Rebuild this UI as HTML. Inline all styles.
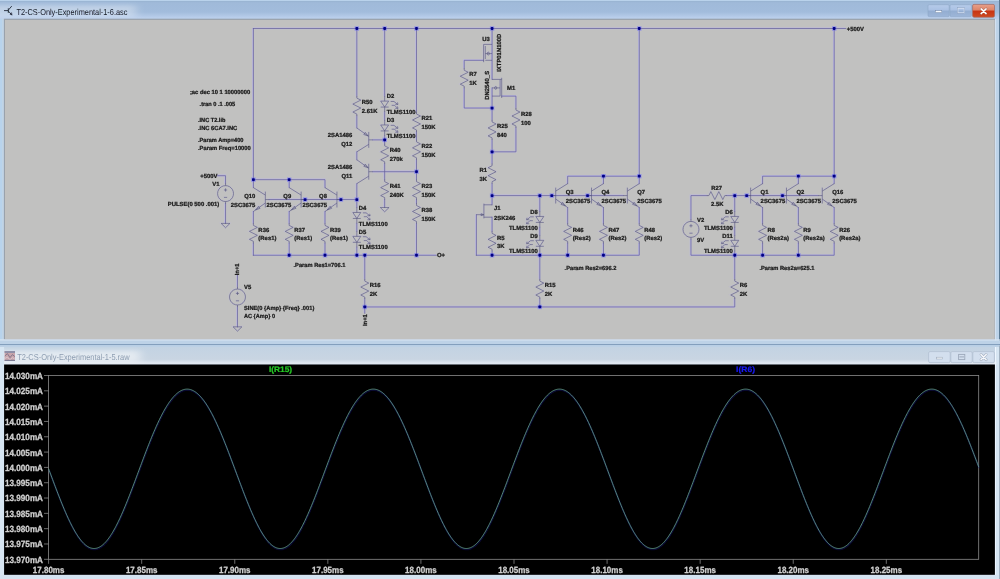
<!DOCTYPE html>
<html><head><meta charset="utf-8"><title>LTspice</title>
<style>
html,body{margin:0;padding:0;background:#c9dcf0;overflow:hidden}
svg{display:block}
text{font-family:"Liberation Sans",sans-serif;text-rendering:geometricPrecision}
</style></head><body>
<svg width="1000" height="579" viewBox="0 0 1000 579">
<defs>
<filter id="soft" x="0" y="0" width="1000" height="579" filterUnits="userSpaceOnUse"><feGaussianBlur stdDeviation="0.42"/></filter>
<filter id="halo" x="0" y="0" width="1000" height="579" filterUnits="userSpaceOnUse"><feGaussianBlur stdDeviation="0.7"/></filter>
<filter id="glow" x="-40" y="-20" width="260" height="420" filterUnits="userSpaceOnUse"><feGaussianBlur stdDeviation="5 2.2"/></filter>
<filter id="soft2" x="0" y="0" width="1000" height="579" filterUnits="userSpaceOnUse"><feGaussianBlur stdDeviation="0.3"/></filter>
<linearGradient id="tb" x1="0" y1="0" x2="0" y2="1"><stop offset="0" stop-color="#9fb9d8"/><stop offset="0.6" stop-color="#a2bcdc"/><stop offset="0.88" stop-color="#b9ceeb"/><stop offset="1" stop-color="#b9ceeb"/></linearGradient>
<linearGradient id="tb2" x1="0" y1="0" x2="0" y2="1"><stop offset="0" stop-color="#c3d3e3"/><stop offset="0.7" stop-color="#c9d5e2"/><stop offset="0.9" stop-color="#e0e7f0"/><stop offset="1" stop-color="#e4eaf3"/></linearGradient>
<linearGradient id="tbh" x1="0" y1="0" x2="1" y2="0"><stop offset="0" stop-color="#a8c6e0" stop-opacity="0.5"/><stop offset="0.5" stop-color="#b2c4e8" stop-opacity="0.35"/><stop offset="1" stop-color="#b6c2ec" stop-opacity="0.6"/></linearGradient>
<linearGradient id="cl" x1="0" y1="0" x2="0" y2="1"><stop offset="0" stop-color="#e8a08a"/><stop offset="0.44" stop-color="#de8468"/><stop offset="0.52" stop-color="#c83414"/><stop offset="1" stop-color="#cf4a20"/></linearGradient>
<linearGradient id="bt" x1="0" y1="0" x2="0" y2="1"><stop offset="0" stop-color="#b6cbea"/><stop offset="0.46" stop-color="#aac1e3"/><stop offset="0.52" stop-color="#93add1"/><stop offset="1" stop-color="#9db6d8"/></linearGradient>
</defs>
<rect x="0" y="0" width="1000" height="579" fill="#bcd2ea"/>
<!-- top window title bar -->
<rect x="0" y="0" width="1000" height="20" fill="url(#tb)"/>
<rect x="0" y="0" width="1000" height="1.2" fill="#b9d2eb"/>
<rect x="0" y="1.2" width="1000" height="0.9" fill="#98b3d1"/>
<rect x="-10" y="5" width="146" height="12" fill="#fff" opacity="0.33" filter="url(#glow)"/>
<!-- left/right frame -->
<rect x="0" y="19" width="4.2" height="322" fill="#b8d3ec"/>
<rect x="2" y="19" width="2" height="322" fill="#c0d4e6"/>
<rect x="995" y="19" width="1.3" height="322" fill="#d4e1f0"/>
<rect x="996.3" y="19" width="2.7" height="322" fill="#bdd3e9"/>
<rect x="999" y="0" width="1" height="346" fill="#5c7a94"/>
<!-- schematic canvas -->
<rect x="3.9" y="18.7" width="991.1" height="320.8" fill="#98a1ab"/>
<rect x="4.95" y="19.9" width="989.75" height="319.5" fill="#c1c1c0"/>
<!-- separator between windows -->
<rect x="0" y="339.4" width="1000" height="1.3" fill="#dbe7f3"/>
<rect x="0" y="340.7" width="1000" height="3.5" fill="#bdd2e7"/>
<rect x="0" y="344.1" width="1000" height="1.1" fill="#7d9ab8"/>
<rect x="0" y="345.2" width="1000" height="1.8" fill="#bcd1e6"/>
<rect x="0" y="347" width="1000" height="17.6" fill="url(#tb2)"/>
<rect x="-10" y="350.5" width="150" height="12" fill="#fff" opacity="0.5" filter="url(#glow)"/>
<rect x="0" y="347" width="4.1" height="232" fill="#d7e6f3"/>
<rect x="995" y="347" width="1.4" height="232" fill="#eef6ff"/>
<rect x="996.4" y="347" width="2.6" height="232" fill="#d7e6f3"/>
<rect x="999" y="346" width="1" height="233" fill="#a0b0c0"/>
<!-- waveform canvas -->
<rect x="4.1" y="364.5" width="990.8" height="210.4" fill="#000"/>
<rect x="0" y="574.9" width="999" height="4.1" fill="#d5e3f1"/>

<g filter="url(#soft2)">
<g fill="none" stroke="#1c2230" stroke-width="0.85" stroke-linecap="round">
<path d="M4.4,10.6 H8.2"/><path d="M8.3,8.6 V12.6" stroke-width="0.8"/><path d="M8.4,10 L11.5,6.4"/><path d="M8.4,11.2 L11.4,14.4"/>
<path d="M11.9,15 L9.9,14.2 L11.3,12.8 Z" fill="#1c2230" stroke-width="0.4"/>
</g>
<text transform="translate(16.4,14.7) scale(0.1)" font-size="86" fill="#161a26" textLength="1110" lengthAdjust="spacingAndGlyphs">T2-CS-Only-Experimental-1-6.asc</text>
</g>
<!-- top window buttons -->
<rect x="928" y="4.7" width="21.2" height="11.9" rx="1.2" fill="url(#bt)" stroke="#8fa8c8" stroke-width="0.6"/>
<rect x="950" y="4.7" width="21.4" height="11.9" rx="1.2" fill="url(#bt)" stroke="#8fa8c8" stroke-width="0.6"/>
<rect x="972.6" y="4.4" width="21.9" height="12.8" rx="1.4" fill="url(#cl)" stroke="#a2665e" stroke-width="0.7"/>
<rect x="935.4" y="10.7" width="6.4" height="1.9" fill="#f4f8fc" stroke="#6a7c9a" stroke-width="0.4"/>
<rect x="957.9" y="8.3" width="6.3" height="4.5" fill="none" stroke="#d3def0" stroke-width="1"/>
<rect x="957.3" y="7.7" width="7.5" height="5.7" fill="none" stroke="#7c8eaa" stroke-width="0.3"/>
<path d="M981.1,8.9 L986.1,13.6 M986.1,8.9 L981.1,13.6" stroke="#8a5048" stroke-width="2.5" fill="none" stroke-linecap="round" opacity="0.6"/>
<path d="M981.1,8.9 L986.1,13.6 M986.1,8.9 L981.1,13.6" stroke="#fff" stroke-width="1.5" fill="none" stroke-linecap="round"/>
<!-- bottom window title -->
<g>
<rect x="4.6" y="351" width="10.4" height="10" fill="#c9a6ac"/>
<rect x="4.6" y="351" width="10.4" height="2" fill="#8f90a8"/>
<path d="M4.8,356 L7.4,353.6 L10,357.6 L12.4,354.6 L14.8,356.6" stroke="#7c7088" stroke-width="0.9" fill="none"/>
<path d="M4.8,358.6 L7.4,357 L10,360 L12.4,357.6 L14.8,359.4" stroke="#d8c4cc" stroke-width="0.9" fill="none"/>
<rect x="4.6" y="359.8" width="10.4" height="1.2" fill="#7c7c94"/>
</g>
<g filter="url(#soft)"><text transform="translate(17.2,359.5) scale(0.1)" font-size="86" fill="#8d9db1" textLength="1124" lengthAdjust="spacingAndGlyphs">T2-CS-Only-Experimental-1-5.raw</text></g>
<rect x="928.6" y="351.6" width="21.6" height="11" rx="1.4" fill="#d3dfee" stroke="#b3c0d2" stroke-width="0.8"/>
<rect x="950.8" y="351.6" width="21.4" height="11" rx="1.4" fill="#d3dfee" stroke="#b3c0d2" stroke-width="0.8"/>
<rect x="972.8" y="351.6" width="21.6" height="11" rx="1.4" fill="#d3dfee" stroke="#b3c0d2" stroke-width="0.8"/>
<rect x="936.4" y="357.2" width="6" height="1.8" fill="#f0f4f8" stroke="#98a4b6" stroke-width="0.5"/>
<rect x="958.6" y="354.4" width="6.2" height="5.2" fill="none" stroke="#9ca8ba" stroke-width="0.9"/>
<rect x="959.4" y="356.4" width="4.6" height="1" fill="#9ca8ba"/>
<path d="M981,354.4 L986.2,359.8 M986.2,354.4 L981,359.8" stroke="#a3afc1" stroke-width="2.7" fill="none" stroke-linecap="round"/>
<path d="M981,354.4 L986.2,359.8 M986.2,354.4 L981,359.8" stroke="#f6f8fb" stroke-width="1.5" fill="none" stroke-linecap="round"/>

<defs><path id="W" d="M253.4,28.5 L845.72,28.5 M253.4,28.5 L253.4,187.62 M217.5,175.69 L225.55,175.69 L225.55,183.64 M225.55,203.53 L225.55,223.42 M253.4,179.66 L325,179.66 L325,187.62 M289.2,179.66 L289.2,187.62 M253.4,211.49 L253.4,223.42 M253.4,243.31 L253.4,255.25 M289.2,211.49 L289.2,223.42 M289.2,243.31 L289.2,255.25 M325,211.49 L325,223.42 M325,243.31 L325,255.25 M269.31,199.55 L356.83,199.55 M253.4,255.25 L436.39,255.25 M356.83,28.5 L356.83,96.13 M356.83,116.02 L356.83,127.95 M356.83,151.82 L356.83,159.77 M356.83,183.64 L356.83,207.51 M356.83,223.42 L356.83,231.38 M356.83,247.29 L356.83,255.25 M372.74,139.88 L384.67,139.88 M372.74,171.71 L416.5,171.71 M384.67,28.5 L384.67,96.13 M384.67,112.04 L384.67,119.99 M384.67,135.91 L384.67,143.86 M384.67,163.75 L384.67,179.66 M384.67,199.55 L384.67,207.51 M416.5,28.5 L416.5,112.04 M416.5,131.93 L416.5,139.88 M416.5,159.77 L416.5,179.66 M416.5,199.55 L416.5,203.53 M416.5,223.42 L416.5,255.25 M364.78,255.25 L364.78,279.11 M364.78,299 L364.78,313.32 M364.78,306.96 L734.74,306.96 L734.74,299 M237.49,275.14 L237.49,287.07 M237.49,306.96 L237.49,326.85 M492.08,28.5 L492.08,79.4 M492.08,87.9 L492.08,119.99 M483.6,60.32 L464.23,60.32 L464.23,68.28 M464.23,88.17 L464.23,108.06 L492.08,108.06 M501.7,96.13 L515.95,96.13 L515.95,108.06 M515.95,127.95 L515.95,151.82 L492.08,151.82 M492.08,139.88 L492.08,163.75 M492.08,183.64 L492.08,204.8 M476.4,214.7 L476.4,255.25 M492.08,217.2 L492.08,231.38 M492.08,251.27 L492.08,255.25 M476.4,255.25 L639.27,255.25 L639.27,243.31 M492.08,195.58 L623.35,195.58 M539.82,195.58 L539.82,211.49 M539.82,227.4 L539.82,235.36 M539.82,251.27 L539.82,279.11 M539.82,299 L539.82,306.96 M567.66,183.64 L567.66,176.2 L639.27,176.2 M603.46,183.64 L603.46,176.2 M639.27,28.5 L639.27,183.64 M567.66,207.51 L567.66,223.42 M567.66,243.31 L567.66,255.25 M603.46,207.51 L603.46,223.42 M603.46,243.31 L603.46,255.25 M639.27,207.51 L639.27,223.42 M690.98,219.44 L690.98,195.58 L706.89,195.58 M726.78,195.58 L818.28,195.58 M690.98,239.33 L690.98,255.25 L834.19,255.25 L834.19,243.31 M734.74,195.58 L734.74,211.49 M734.74,227.4 L734.74,235.36 M734.74,251.27 L734.74,279.11 M762.58,183.64 L762.58,176.2 L834.19,176.2 M798.39,183.64 L798.39,176.2 M834.19,28.5 L834.19,183.64 M762.58,207.51 L762.58,223.42 M762.58,243.31 L762.58,255.25 M798.39,207.51 L798.39,223.42 M798.39,243.31 L798.39,255.25 M834.19,207.51 L834.19,223.42"/><path id="S" d="M225.55,185.63 a7.96,7.96 0 1 0 0.01,0 Z M225.55,183.64 L225.55,185.63 M225.55,201.54 L225.55,203.53 M223.95,189.99 L227.15,189.99 M225.55,188.39 L225.55,191.59 M223.95,197.39 L227.15,197.39 M221.15,223.42 L229.95,223.42 L225.55,227.72 Z M265.33,191.6 L265.33,207.51 M269.31,199.55 L265.33,199.55 M253.4,187.62 L265.33,195.08 M265.33,203.03 L253.4,211.49 M255.55,209.97 L258.55,206.25 L260.05,208.37 Z M253.4,223.42 L253.4,225.41 L257.38,227.4 L249.42,231.38 L257.38,235.36 L249.42,239.33 L253.4,241.32 L253.4,243.31 M301.14,191.6 L301.14,207.51 M305.11,199.55 L301.14,199.55 M289.2,187.62 L301.14,195.08 M301.14,203.03 L289.2,211.49 M291.35,209.97 L294.35,206.25 L295.86,208.37 Z M289.2,223.42 L289.2,225.41 L293.18,227.4 L285.22,231.38 L293.18,235.36 L285.22,239.33 L289.2,241.32 L289.2,243.31 M336.94,191.6 L336.94,207.51 M340.92,199.55 L336.94,199.55 M325,187.62 L336.94,195.08 M336.94,203.03 L325,211.49 M327.15,209.97 L330.15,206.25 L331.66,208.37 Z M325,223.42 L325,225.41 L328.98,227.4 L321.03,231.38 L328.98,235.36 L321.03,239.33 L325,241.32 L325,243.31 M356.83,96.13 L356.83,98.12 L360.81,100.1 L352.85,104.08 L360.81,108.06 L352.85,112.04 L356.83,114.03 L356.83,116.02 M368.76,131.93 L368.76,147.84 M372.74,139.88 L368.76,139.88 M356.83,127.95 L368.76,136.4 M368.76,144.36 L356.83,151.82 M368.17,135.98 L363.82,134.5 L365.33,132.38 Z M368.76,163.75 L368.76,179.66 M372.74,171.71 L368.76,171.71 M356.83,159.77 L368.76,168.23 M368.76,176.18 L356.83,183.64 M368.17,167.8 L363.82,166.32 L365.33,164.2 Z M352.85,212.48 L360.81,212.48 L356.83,218.45 Z M352.85,218.45 L360.81,218.45 M356.83,207.51 L356.83,212.48 M356.83,218.45 L356.83,223.42 M362.83,212.86 L366.13,212.86 L369.83,215.81 M367.43,215.71 L370.13,215.81 L369.63,213.81 M363.83,216.71 L366.83,216.71 L369.83,219.81 M367.43,219.71 L370.13,219.81 L369.63,217.81 M352.85,236.35 L360.81,236.35 L356.83,242.32 Z M352.85,242.32 L360.81,242.32 M356.83,231.38 L356.83,236.35 M356.83,242.32 L356.83,247.29 M362.83,236.73 L366.13,236.73 L369.83,239.68 M367.43,239.58 L370.13,239.68 L369.63,237.68 M363.83,240.58 L366.83,240.58 L369.83,243.68 M367.43,243.58 L370.13,243.68 L369.63,241.68 M380.7,101.1 L388.65,101.1 L384.67,107.07 Z M380.7,107.07 L388.65,107.07 M384.67,96.13 L384.67,101.1 M384.67,107.07 L384.67,112.04 M390.67,101.48 L393.97,101.48 L397.67,104.43 M395.27,104.33 L397.97,104.43 L397.47,102.43 M391.67,105.33 L394.67,105.33 L397.67,108.43 M395.27,108.33 L397.97,108.43 L397.47,106.43 M380.7,124.97 L388.65,124.97 L384.67,130.93 Z M380.7,130.93 L388.65,130.93 M384.67,119.99 L384.67,124.97 M384.67,130.93 L384.67,135.91 M390.67,125.34 L393.97,125.34 L397.67,128.29 M395.27,128.19 L397.97,128.29 L397.47,126.29 M391.67,129.19 L394.67,129.19 L397.67,132.29 M395.27,132.19 L397.97,132.29 L397.47,130.29 M384.67,143.86 L384.67,145.85 L388.65,147.84 L380.7,151.82 L388.65,155.8 L380.7,159.77 L384.67,161.76 L384.67,163.75 M384.67,179.66 L384.67,181.65 L388.65,183.64 L380.7,187.62 L388.65,191.6 L380.7,195.58 L384.67,197.57 L384.67,199.55 M380.27,207.51 L389.07,207.51 L384.67,211.81 Z M416.5,112.04 L416.5,114.03 L420.48,116.02 L412.52,119.99 L420.48,123.97 L412.52,127.95 L416.5,129.94 L416.5,131.93 M416.5,139.88 L416.5,141.87 L420.48,143.86 L412.52,147.84 L420.48,151.82 L412.52,155.8 L416.5,157.79 L416.5,159.77 M416.5,179.66 L416.5,181.65 L420.48,183.64 L412.52,187.62 L420.48,191.6 L412.52,195.58 L416.5,197.57 L416.5,199.55 M416.5,203.53 L416.5,205.52 L420.48,207.51 L412.52,211.49 L420.48,215.47 L412.52,219.44 L416.5,221.43 L416.5,223.42 M364.78,279.11 L364.78,281.1 L368.76,283.09 L360.81,287.07 L368.76,291.05 L360.81,295.03 L364.78,297.02 L364.78,299 M237.49,289.06 a7.96,7.96 0 1 0 0.01,0 Z M237.49,287.07 L237.49,289.06 M237.49,304.97 L237.49,306.96 M235.89,293.41 L239.09,293.41 M237.49,291.81 L237.49,295.01 M235.89,300.81 L239.09,300.81 M233.09,326.85 L241.89,326.85 L237.49,331.15 Z M483.6,44.4 L492.08,44.4 M483.6,44.4 L483.6,62.2 M485.3,46 L485.3,59 M485.3,53.6 L492.08,53.6 M487.2,53.6 a1.1,1.4 0 1 0 2.2,0 a1.1,1.4 0 1 0 -2.2,0 Z M485.3,60.3 L492.08,60.3 M464.23,68.28 L464.23,70.27 L468.21,72.26 L460.26,76.24 L468.21,80.21 L460.26,84.19 L464.23,86.18 L464.23,88.17 M492.08,79.4 L501.7,79.4 M501.7,77.8 L501.7,98 M500.1,79.4 L500.1,96.1 M492.08,87.9 L500.1,87.9 M494.6,87.9 a1.1,1.4 0 1 0 2.2,0 a1.1,1.4 0 1 0 -2.2,0 Z M492.08,96.1 L500.1,96.1 M515.95,108.06 L515.95,110.05 L519.93,112.04 L511.97,116.02 L519.93,119.99 L511.97,123.97 L515.95,125.96 L515.95,127.95 M492.08,119.99 L492.08,121.98 L496.06,123.97 L488.1,127.95 L496.06,131.93 L488.1,135.91 L492.08,137.9 L492.08,139.88 M492.08,163.75 L492.08,165.74 L488.1,167.73 L496.06,171.71 L488.1,175.69 L496.06,179.66 L492.08,181.65 L492.08,183.64 M492.08,204.8 L483.9,204.8 M483.9,203.6 L483.9,218.4 M483.9,217.2 L492.08,217.2 M476.4,214.7 L483.9,214.7 M483.7,214.7 L481.1,215.7 L481.1,213.7 Z M492.08,231.38 L492.08,233.37 L496.06,235.36 L488.1,239.33 L496.06,243.31 L488.1,247.29 L492.08,249.28 L492.08,251.27 M535.84,216.46 L543.79,216.46 L539.82,222.43 Z M535.84,222.43 L543.79,222.43 M539.82,211.49 L539.82,216.46 M539.82,222.43 L539.82,227.4 M533.82,216.84 L530.52,216.84 L526.82,219.79 M529.22,219.69 L526.52,219.79 L527.02,217.79 M532.82,220.69 L529.82,220.69 L526.82,223.79 M529.22,223.69 L526.52,223.79 L527.02,221.79 M535.84,240.33 L543.79,240.33 L539.82,246.3 Z M535.84,246.3 L543.79,246.3 M539.82,235.36 L539.82,240.33 M539.82,246.3 L539.82,251.27 M533.82,240.71 L530.52,240.71 L526.82,243.66 M529.22,243.56 L526.52,243.66 L527.02,241.66 M532.82,244.56 L529.82,244.56 L526.82,247.66 M529.22,247.56 L526.52,247.66 L527.02,245.66 M539.82,279.11 L539.82,281.1 L543.79,283.09 L535.84,287.07 L543.79,291.05 L535.84,295.03 L539.82,297.02 L539.82,299 M555.73,187.62 L555.73,203.53 M551.75,195.58 L555.73,195.58 M567.66,183.64 L555.73,191.1 M555.73,199.06 L567.66,207.51 M565.51,205.99 L561.01,204.39 L562.51,202.27 Z M567.66,223.42 L567.66,225.41 L571.64,227.4 L563.68,231.38 L571.64,235.36 L563.68,239.33 L567.66,241.32 L567.66,243.31 M591.53,187.62 L591.53,203.53 M587.55,195.58 L591.53,195.58 M603.46,183.64 L591.53,191.1 M591.53,199.06 L603.46,207.51 M601.32,205.99 L596.81,204.39 L598.31,202.27 Z M603.46,223.42 L603.46,225.41 L607.44,227.4 L599.49,231.38 L607.44,235.36 L599.49,239.33 L603.46,241.32 L603.46,243.31 M627.33,187.62 L627.33,203.53 M623.35,195.58 L627.33,195.58 M639.27,183.64 L627.33,191.1 M627.33,199.06 L639.27,207.51 M637.12,205.99 L632.61,204.39 L634.12,202.27 Z M639.27,223.42 L639.27,225.41 L643.24,227.4 L635.29,231.38 L643.24,235.36 L635.29,239.33 L639.27,241.32 L639.27,243.31 M706.89,195.58 L708.88,195.58 L710.87,191.6 L714.85,199.55 L718.83,191.6 L722.8,199.55 L724.79,195.58 L726.78,195.58 M690.98,221.43 a7.96,7.96 0 1 0 0.01,0 Z M690.98,219.44 L690.98,221.43 M690.98,237.34 L690.98,239.33 M689.38,225.79 L692.58,225.79 M690.98,224.19 L690.98,227.39 M689.38,233.19 L692.58,233.19 M730.76,216.46 L738.72,216.46 L734.74,222.43 Z M730.76,222.43 L738.72,222.43 M734.74,211.49 L734.74,216.46 M734.74,222.43 L734.74,227.4 M728.74,216.84 L725.44,216.84 L721.74,219.79 M724.14,219.69 L721.44,219.79 L721.94,217.79 M727.74,220.69 L724.74,220.69 L721.74,223.79 M724.14,223.69 L721.44,223.79 L721.94,221.79 M730.76,240.33 L738.72,240.33 L734.74,246.3 Z M730.76,246.3 L738.72,246.3 M734.74,235.36 L734.74,240.33 M734.74,246.3 L734.74,251.27 M728.74,240.71 L725.44,240.71 L721.74,243.66 M724.14,243.56 L721.44,243.66 L721.94,241.66 M727.74,244.56 L724.74,244.56 L721.74,247.66 M724.14,247.56 L721.44,247.66 L721.94,245.66 M734.74,279.11 L734.74,281.1 L738.72,283.09 L730.76,287.07 L738.72,291.05 L730.76,295.03 L734.74,297.02 L734.74,299 M750.65,187.62 L750.65,203.53 M746.67,195.58 L750.65,195.58 M762.58,183.64 L750.65,191.1 M750.65,199.06 L762.58,207.51 M760.44,205.99 L755.93,204.39 L757.43,202.27 Z M762.58,223.42 L762.58,225.41 L766.56,227.4 L758.61,231.38 L766.56,235.36 L758.61,239.33 L762.58,241.32 L762.58,243.31 M786.45,187.62 L786.45,203.53 M782.47,195.58 L786.45,195.58 M798.39,183.64 L786.45,191.1 M786.45,199.06 L798.39,207.51 M796.24,205.99 L791.73,204.39 L793.24,202.27 Z M798.39,223.42 L798.39,225.41 L802.36,227.4 L794.41,231.38 L802.36,235.36 L794.41,239.33 L798.39,241.32 L798.39,243.31 M822.25,187.62 L822.25,203.53 M818.28,195.58 L822.25,195.58 M834.19,183.64 L822.25,191.1 M822.25,199.06 L834.19,207.51 M832.04,205.99 L827.53,204.39 L829.04,202.27 Z M834.19,223.42 L834.19,225.41 L838.17,227.4 L830.21,231.38 L838.17,235.36 L830.21,239.33 L834.19,241.32 L834.19,243.31"/></defs>
<g filter="url(#halo)" fill="none" stroke="#b4aefc">
<use href="#W" stroke-width="1.8" opacity="0.5" transform="translate(-0.35,-0.2)"/><use href="#S" stroke-width="1.6" opacity="0.22" transform="translate(-0.3,-0.2)"/>
<g fill="#6a6aff" stroke="none" opacity="0.55">
<rect x="354.63" y="26.3" width="4.4" height="4.4"/>
<rect x="382.47" y="26.3" width="4.4" height="4.4"/>
<rect x="414.3" y="26.3" width="4.4" height="4.4"/>
<rect x="489.88" y="26.3" width="4.4" height="4.4"/>
<rect x="637.07" y="26.3" width="4.4" height="4.4"/>
<rect x="831.99" y="26.3" width="4.4" height="4.4"/>
<rect x="251.2" y="177.46" width="4.4" height="4.4"/>
<rect x="287" y="177.46" width="4.4" height="4.4"/>
<rect x="302.91" y="197.35" width="4.4" height="4.4"/>
<rect x="338.72" y="197.35" width="4.4" height="4.4"/>
<rect x="354.63" y="197.35" width="4.4" height="4.4"/>
<rect x="287" y="253.05" width="4.4" height="4.4"/>
<rect x="322.8" y="253.05" width="4.4" height="4.4"/>
<rect x="354.63" y="253.05" width="4.4" height="4.4"/>
<rect x="362.58" y="253.05" width="4.4" height="4.4"/>
<rect x="414.3" y="253.05" width="4.4" height="4.4"/>
<rect x="382.47" y="137.68" width="4.4" height="4.4"/>
<rect x="414.3" y="169.51" width="4.4" height="4.4"/>
<rect x="362.58" y="304.76" width="4.4" height="4.4"/>
<rect x="537.62" y="304.76" width="4.4" height="4.4"/>
<rect x="489.88" y="105.86" width="4.4" height="4.4"/>
<rect x="489.88" y="149.62" width="4.4" height="4.4"/>
<rect x="489.88" y="193.38" width="4.4" height="4.4"/>
<rect x="489.88" y="253.05" width="4.4" height="4.4"/>
<rect x="537.62" y="253.05" width="4.4" height="4.4"/>
<rect x="565.46" y="253.05" width="4.4" height="4.4"/>
<rect x="601.26" y="253.05" width="4.4" height="4.4"/>
<rect x="537.62" y="193.38" width="4.4" height="4.4"/>
<rect x="549.55" y="193.38" width="4.4" height="4.4"/>
<rect x="585.35" y="193.38" width="4.4" height="4.4"/>
<rect x="601.26" y="174" width="4.4" height="4.4"/>
<rect x="637.07" y="174" width="4.4" height="4.4"/>
<rect x="732.54" y="193.38" width="4.4" height="4.4"/>
<rect x="744.47" y="193.38" width="4.4" height="4.4"/>
<rect x="780.27" y="193.38" width="4.4" height="4.4"/>
<rect x="732.54" y="253.05" width="4.4" height="4.4"/>
<rect x="760.38" y="253.05" width="4.4" height="4.4"/>
<rect x="796.19" y="253.05" width="4.4" height="4.4"/>
<rect x="796.19" y="174" width="4.4" height="4.4"/>
<rect x="831.99" y="174" width="4.4" height="4.4"/>
</g></g>
<g filter="url(#soft)">
<use href="#W" fill="none" stroke="#666298" stroke-width="0.74" stroke-linecap="square"/>
<use href="#S" fill="none" stroke="#565678" stroke-width="0.62"/>
<g fill="#040486">
<rect x="355.43" y="27.1" width="2.8" height="2.8" rx="0.8"/>
<rect x="383.27" y="27.1" width="2.8" height="2.8" rx="0.8"/>
<rect x="415.1" y="27.1" width="2.8" height="2.8" rx="0.8"/>
<rect x="490.68" y="27.1" width="2.8" height="2.8" rx="0.8"/>
<rect x="637.87" y="27.1" width="2.8" height="2.8" rx="0.8"/>
<rect x="832.79" y="27.1" width="2.8" height="2.8" rx="0.8"/>
<rect x="252" y="178.26" width="2.8" height="2.8" rx="0.8"/>
<rect x="287.8" y="178.26" width="2.8" height="2.8" rx="0.8"/>
<rect x="303.71" y="198.15" width="2.8" height="2.8" rx="0.8"/>
<rect x="339.52" y="198.15" width="2.8" height="2.8" rx="0.8"/>
<rect x="355.43" y="198.15" width="2.8" height="2.8" rx="0.8"/>
<rect x="287.8" y="253.85" width="2.8" height="2.8" rx="0.8"/>
<rect x="323.6" y="253.85" width="2.8" height="2.8" rx="0.8"/>
<rect x="355.43" y="253.85" width="2.8" height="2.8" rx="0.8"/>
<rect x="363.38" y="253.85" width="2.8" height="2.8" rx="0.8"/>
<rect x="415.1" y="253.85" width="2.8" height="2.8" rx="0.8"/>
<rect x="383.27" y="138.48" width="2.8" height="2.8" rx="0.8"/>
<rect x="415.1" y="170.31" width="2.8" height="2.8" rx="0.8"/>
<rect x="363.38" y="305.56" width="2.8" height="2.8" rx="0.8"/>
<rect x="538.42" y="305.56" width="2.8" height="2.8" rx="0.8"/>
<rect x="490.68" y="106.66" width="2.8" height="2.8" rx="0.8"/>
<rect x="490.68" y="150.42" width="2.8" height="2.8" rx="0.8"/>
<rect x="490.68" y="194.18" width="2.8" height="2.8" rx="0.8"/>
<rect x="490.68" y="253.85" width="2.8" height="2.8" rx="0.8"/>
<rect x="538.42" y="253.85" width="2.8" height="2.8" rx="0.8"/>
<rect x="566.26" y="253.85" width="2.8" height="2.8" rx="0.8"/>
<rect x="602.06" y="253.85" width="2.8" height="2.8" rx="0.8"/>
<rect x="538.42" y="194.18" width="2.8" height="2.8" rx="0.8"/>
<rect x="550.35" y="194.18" width="2.8" height="2.8" rx="0.8"/>
<rect x="586.15" y="194.18" width="2.8" height="2.8" rx="0.8"/>
<rect x="602.06" y="174.8" width="2.8" height="2.8" rx="0.8"/>
<rect x="637.87" y="174.8" width="2.8" height="2.8" rx="0.8"/>
<rect x="733.34" y="194.18" width="2.8" height="2.8" rx="0.8"/>
<rect x="745.27" y="194.18" width="2.8" height="2.8" rx="0.8"/>
<rect x="781.07" y="194.18" width="2.8" height="2.8" rx="0.8"/>
<rect x="733.34" y="253.85" width="2.8" height="2.8" rx="0.8"/>
<rect x="761.18" y="253.85" width="2.8" height="2.8" rx="0.8"/>
<rect x="796.99" y="253.85" width="2.8" height="2.8" rx="0.8"/>
<rect x="796.99" y="174.8" width="2.8" height="2.8" rx="0.8"/>
<rect x="832.79" y="174.8" width="2.8" height="2.8" rx="0.8"/>
</g>
<g stroke="#181818" stroke-width="2.4">
<text transform="translate(189.9,94.45) scale(0.1)" text-anchor="start" font-size="59" fill="#181818" font-weight="bold" textLength="603" lengthAdjust="spacingAndGlyphs">;ac dec 10 1 10000000</text>
<text transform="translate(199.6,106.05) scale(0.1)" text-anchor="start" font-size="59" fill="#181818" font-weight="bold" textLength="356" lengthAdjust="spacingAndGlyphs">.tran 0 .1 .005</text>
<text transform="translate(198,122.05) scale(0.1)" text-anchor="start" font-size="59" fill="#181818" font-weight="bold" textLength="274" lengthAdjust="spacingAndGlyphs">.INC T2.lib</text>
<text transform="translate(198,130.15) scale(0.1)" text-anchor="start" font-size="59" fill="#181818" font-weight="bold" textLength="392" lengthAdjust="spacingAndGlyphs">.INC 6CA7.INC</text>
<text transform="translate(198,141.95) scale(0.1)" text-anchor="start" font-size="59" fill="#181818" font-weight="bold" textLength="454" lengthAdjust="spacingAndGlyphs">.Param Amp=400</text>
<text transform="translate(198,150.15) scale(0.1)" text-anchor="start" font-size="59" fill="#181818" font-weight="bold" textLength="527" lengthAdjust="spacingAndGlyphs">.Param Freq=10000</text>
<text transform="translate(293.5,267.35) scale(0.1)" text-anchor="start" font-size="59" fill="#181818" font-weight="bold" textLength="519" lengthAdjust="spacingAndGlyphs">.Param Res1=706.1</text>
<text transform="translate(564.6,270.05) scale(0.1)" text-anchor="start" font-size="59" fill="#181818" font-weight="bold" textLength="517" lengthAdjust="spacingAndGlyphs">.Param Res2=696.2</text>
<text transform="translate(759.4,270.05) scale(0.1)" text-anchor="start" font-size="59" fill="#181818" font-weight="bold" textLength="550" lengthAdjust="spacingAndGlyphs">.Param Res2a=625.1</text>
<text transform="translate(846.72,30.65) scale(0.1)" text-anchor="start" font-size="59" fill="#181818" font-weight="bold">+500V</text>
<text transform="translate(200.2,177.64) scale(0.1)" text-anchor="start" font-size="59" fill="#181818" font-weight="bold">+500V</text>
<text transform="translate(212.2,185.65) scale(0.1)" text-anchor="start" font-size="59" fill="#181818" font-weight="bold">V1</text>
<text transform="translate(219.3,205.75) scale(0.1)" text-anchor="end" font-size="59" fill="#181818" font-weight="bold" textLength="516" lengthAdjust="spacingAndGlyphs">PULSE(0 500 .001)</text>
<text transform="translate(255.39,197.73) scale(0.1)" text-anchor="end" font-size="59" fill="#181818" font-weight="bold">Q10</text>
<text transform="translate(255.39,206.68) scale(0.1)" text-anchor="end" font-size="59" fill="#181818" font-weight="bold">2SC3675</text>
<text transform="translate(258.37,231.54) scale(0.1)" text-anchor="start" font-size="59" fill="#181818" font-weight="bold">R36</text>
<text transform="translate(258.37,240.49) scale(0.1)" text-anchor="start" font-size="59" fill="#181818" font-weight="bold">(Res1)</text>
<text transform="translate(291.19,197.73) scale(0.1)" text-anchor="end" font-size="59" fill="#181818" font-weight="bold">Q9</text>
<text transform="translate(291.19,206.68) scale(0.1)" text-anchor="end" font-size="59" fill="#181818" font-weight="bold">2SC3675</text>
<text transform="translate(294.17,231.54) scale(0.1)" text-anchor="start" font-size="59" fill="#181818" font-weight="bold">R37</text>
<text transform="translate(294.17,240.49) scale(0.1)" text-anchor="start" font-size="59" fill="#181818" font-weight="bold">(Res1)</text>
<text transform="translate(326.99,197.73) scale(0.1)" text-anchor="end" font-size="59" fill="#181818" font-weight="bold">Q8</text>
<text transform="translate(326.99,206.68) scale(0.1)" text-anchor="end" font-size="59" fill="#181818" font-weight="bold">2SC3675</text>
<text transform="translate(329.98,231.54) scale(0.1)" text-anchor="start" font-size="59" fill="#181818" font-weight="bold">R39</text>
<text transform="translate(329.98,240.49) scale(0.1)" text-anchor="start" font-size="59" fill="#181818" font-weight="bold">(Res1)</text>
<text transform="translate(436.99,257.2) scale(0.1)" text-anchor="start" font-size="59" fill="#181818" font-weight="bold">O+</text>
<text transform="translate(361.8,104.25) scale(0.1)" text-anchor="start" font-size="59" fill="#181818" font-weight="bold">R50</text>
<text transform="translate(361.8,113.2) scale(0.1)" text-anchor="start" font-size="59" fill="#181818" font-weight="bold">2.61K</text>
<text transform="translate(352.32,137.06) scale(0.1)" text-anchor="end" font-size="59" fill="#181818" font-weight="bold">2SA1486</text>
<text transform="translate(352.32,146.02) scale(0.1)" text-anchor="end" font-size="59" fill="#181818" font-weight="bold">Q12</text>
<text transform="translate(352.32,168.89) scale(0.1)" text-anchor="end" font-size="59" fill="#181818" font-weight="bold">2SA1486</text>
<text transform="translate(352.32,177.84) scale(0.1)" text-anchor="end" font-size="59" fill="#181818" font-weight="bold">Q11</text>
<text transform="translate(358.82,209.66) scale(0.1)" text-anchor="start" font-size="59" fill="#181818" font-weight="bold">D4</text>
<text transform="translate(358.82,225.58) scale(0.1)" text-anchor="start" font-size="59" fill="#181818" font-weight="bold">TLMS1100</text>
<text transform="translate(358.82,233.53) scale(0.1)" text-anchor="start" font-size="59" fill="#181818" font-weight="bold">D5</text>
<text transform="translate(358.82,249.44) scale(0.1)" text-anchor="start" font-size="59" fill="#181818" font-weight="bold">TLMS1100</text>
<text transform="translate(386.66,98.28) scale(0.1)" text-anchor="start" font-size="59" fill="#181818" font-weight="bold">D2</text>
<text transform="translate(386.66,114.19) scale(0.1)" text-anchor="start" font-size="59" fill="#181818" font-weight="bold">TLMS1100</text>
<text transform="translate(386.66,122.15) scale(0.1)" text-anchor="start" font-size="59" fill="#181818" font-weight="bold">D3</text>
<text transform="translate(386.66,138.06) scale(0.1)" text-anchor="start" font-size="59" fill="#181818" font-weight="bold">TLMS1100</text>
<text transform="translate(389.65,151.98) scale(0.1)" text-anchor="start" font-size="59" fill="#181818" font-weight="bold">R40</text>
<text transform="translate(389.65,160.93) scale(0.1)" text-anchor="start" font-size="59" fill="#181818" font-weight="bold">270k</text>
<text transform="translate(389.65,187.78) scale(0.1)" text-anchor="start" font-size="59" fill="#181818" font-weight="bold">R41</text>
<text transform="translate(389.65,196.74) scale(0.1)" text-anchor="start" font-size="59" fill="#181818" font-weight="bold">240K</text>
<text transform="translate(421.47,120.16) scale(0.1)" text-anchor="start" font-size="59" fill="#181818" font-weight="bold">R21</text>
<text transform="translate(421.47,129.11) scale(0.1)" text-anchor="start" font-size="59" fill="#181818" font-weight="bold">150K</text>
<text transform="translate(421.47,148) scale(0.1)" text-anchor="start" font-size="59" fill="#181818" font-weight="bold">R22</text>
<text transform="translate(421.47,156.96) scale(0.1)" text-anchor="start" font-size="59" fill="#181818" font-weight="bold">150K</text>
<text transform="translate(421.47,187.78) scale(0.1)" text-anchor="start" font-size="59" fill="#181818" font-weight="bold">R23</text>
<text transform="translate(421.47,196.74) scale(0.1)" text-anchor="start" font-size="59" fill="#181818" font-weight="bold">150K</text>
<text transform="translate(421.47,211.65) scale(0.1)" text-anchor="start" font-size="59" fill="#181818" font-weight="bold">R38</text>
<text transform="translate(421.47,220.6) scale(0.1)" text-anchor="start" font-size="59" fill="#181818" font-weight="bold">150K</text>
<text transform="translate(369.76,287.23) scale(0.1)" text-anchor="start" font-size="59" fill="#181818" font-weight="bold">R16</text>
<text transform="translate(369.76,296.19) scale(0.1)" text-anchor="start" font-size="59" fill="#181818" font-weight="bold">2K</text>
<text transform="translate(364.78,314.12) rotate(-90) scale(0.1)" x="0" y="20.06" text-anchor="end" font-size="59" fill="#181818" font-weight="bold">In+1</text>
<text transform="translate(236.99,275.34) rotate(-90) scale(0.1)" x="0" y="20.06" text-anchor="start" font-size="59" fill="#181818" font-weight="bold">In+1</text>
<text transform="translate(244,289.35) scale(0.1)" text-anchor="start" font-size="59" fill="#181818" font-weight="bold">V5</text>
<text transform="translate(244,309.65) scale(0.1)" text-anchor="start" font-size="59" fill="#181818" font-weight="bold" textLength="703" lengthAdjust="spacingAndGlyphs">SINE(0 {Amp} {Freq} .001)</text>
<text transform="translate(244,318.35) scale(0.1)" text-anchor="start" font-size="59" fill="#181818" font-weight="bold" textLength="310" lengthAdjust="spacingAndGlyphs">AC {Amp} 0</text>
<text transform="translate(482.2,40.75) scale(0.1)" text-anchor="start" font-size="59" fill="#181818" font-weight="bold">U3</text>
<text transform="translate(499,71.8) rotate(-90) scale(0.1)" x="0" y="20.06" text-anchor="start" font-size="59" fill="#181818" font-weight="bold">IXTP01N100D</text>
<text transform="translate(469.21,76.4) scale(0.1)" text-anchor="start" font-size="59" fill="#181818" font-weight="bold">R7</text>
<text transform="translate(469.21,85.35) scale(0.1)" text-anchor="start" font-size="59" fill="#181818" font-weight="bold">1K</text>
<text transform="translate(507,90.05) scale(0.1)" text-anchor="start" font-size="59" fill="#181818" font-weight="bold">M1</text>
<text transform="translate(486.6,99.8) rotate(-90) scale(0.1)" x="0" y="20.06" text-anchor="start" font-size="59" fill="#181818" font-weight="bold">DN2540_S</text>
<text transform="translate(520.92,116.18) scale(0.1)" text-anchor="start" font-size="59" fill="#181818" font-weight="bold">R28</text>
<text transform="translate(520.92,125.13) scale(0.1)" text-anchor="start" font-size="59" fill="#181818" font-weight="bold">100</text>
<text transform="translate(497.05,128.11) scale(0.1)" text-anchor="start" font-size="59" fill="#181818" font-weight="bold">R25</text>
<text transform="translate(497.05,137.06) scale(0.1)" text-anchor="start" font-size="59" fill="#181818" font-weight="bold">840</text>
<text transform="translate(487.11,171.87) scale(0.1)" text-anchor="end" font-size="59" fill="#181818" font-weight="bold">R1</text>
<text transform="translate(487.11,180.82) scale(0.1)" text-anchor="end" font-size="59" fill="#181818" font-weight="bold">3K</text>
<text transform="translate(494,210.05) scale(0.1)" text-anchor="start" font-size="59" fill="#181818" font-weight="bold">J1</text>
<text transform="translate(494,220.05) scale(0.1)" text-anchor="start" font-size="59" fill="#181818" font-weight="bold">2SK246</text>
<text transform="translate(497.05,239.5) scale(0.1)" text-anchor="start" font-size="59" fill="#181818" font-weight="bold">R5</text>
<text transform="translate(497.05,248.45) scale(0.1)" text-anchor="start" font-size="59" fill="#181818" font-weight="bold">3K</text>
<text transform="translate(537.83,213.64) scale(0.1)" text-anchor="end" font-size="59" fill="#181818" font-weight="bold">D8</text>
<text transform="translate(537.83,229.55) scale(0.1)" text-anchor="end" font-size="59" fill="#181818" font-weight="bold">TLMS1100</text>
<text transform="translate(537.83,237.51) scale(0.1)" text-anchor="end" font-size="59" fill="#181818" font-weight="bold">D9</text>
<text transform="translate(537.83,253.42) scale(0.1)" text-anchor="end" font-size="59" fill="#181818" font-weight="bold">TLMS1100</text>
<text transform="translate(544.79,287.23) scale(0.1)" text-anchor="start" font-size="59" fill="#181818" font-weight="bold">R15</text>
<text transform="translate(544.79,296.19) scale(0.1)" text-anchor="start" font-size="59" fill="#181818" font-weight="bold">2K</text>
<text transform="translate(565.67,193.75) scale(0.1)" text-anchor="start" font-size="59" fill="#181818" font-weight="bold">Q3</text>
<text transform="translate(565.67,202.7) scale(0.1)" text-anchor="start" font-size="59" fill="#181818" font-weight="bold">2SC3675</text>
<text transform="translate(572.63,231.54) scale(0.1)" text-anchor="start" font-size="59" fill="#181818" font-weight="bold">R46</text>
<text transform="translate(572.63,240.49) scale(0.1)" text-anchor="start" font-size="59" fill="#181818" font-weight="bold">(Res2)</text>
<text transform="translate(601.48,193.75) scale(0.1)" text-anchor="start" font-size="59" fill="#181818" font-weight="bold">Q4</text>
<text transform="translate(601.48,202.7) scale(0.1)" text-anchor="start" font-size="59" fill="#181818" font-weight="bold">2SC3675</text>
<text transform="translate(608.44,231.54) scale(0.1)" text-anchor="start" font-size="59" fill="#181818" font-weight="bold">R47</text>
<text transform="translate(608.44,240.49) scale(0.1)" text-anchor="start" font-size="59" fill="#181818" font-weight="bold">(Res2)</text>
<text transform="translate(637.28,193.75) scale(0.1)" text-anchor="start" font-size="59" fill="#181818" font-weight="bold">Q7</text>
<text transform="translate(637.28,202.7) scale(0.1)" text-anchor="start" font-size="59" fill="#181818" font-weight="bold">2SC3675</text>
<text transform="translate(644.24,231.54) scale(0.1)" text-anchor="start" font-size="59" fill="#181818" font-weight="bold">R48</text>
<text transform="translate(644.24,240.49) scale(0.1)" text-anchor="start" font-size="59" fill="#181818" font-weight="bold">(Res2)</text>
<text transform="translate(711.3,190.25) scale(0.1)" text-anchor="start" font-size="59" fill="#181818" font-weight="bold">R27</text>
<text transform="translate(711,205.65) scale(0.1)" text-anchor="start" font-size="59" fill="#181818" font-weight="bold">2.5K</text>
<text transform="translate(697,221.65) scale(0.1)" text-anchor="start" font-size="59" fill="#181818" font-weight="bold">V2</text>
<text transform="translate(697,241.95) scale(0.1)" text-anchor="start" font-size="59" fill="#181818" font-weight="bold">9V</text>
<text transform="translate(732.75,213.64) scale(0.1)" text-anchor="end" font-size="59" fill="#181818" font-weight="bold">D6</text>
<text transform="translate(732.75,229.55) scale(0.1)" text-anchor="end" font-size="59" fill="#181818" font-weight="bold">TLMS1100</text>
<text transform="translate(732.75,237.51) scale(0.1)" text-anchor="end" font-size="59" fill="#181818" font-weight="bold">D11</text>
<text transform="translate(732.75,253.42) scale(0.1)" text-anchor="end" font-size="59" fill="#181818" font-weight="bold">TLMS1100</text>
<text transform="translate(739.71,287.23) scale(0.1)" text-anchor="start" font-size="59" fill="#181818" font-weight="bold">R6</text>
<text transform="translate(739.71,296.19) scale(0.1)" text-anchor="start" font-size="59" fill="#181818" font-weight="bold">2K</text>
<text transform="translate(760.6,193.75) scale(0.1)" text-anchor="start" font-size="59" fill="#181818" font-weight="bold">Q1</text>
<text transform="translate(760.6,202.7) scale(0.1)" text-anchor="start" font-size="59" fill="#181818" font-weight="bold">2SC3675</text>
<text transform="translate(767.56,231.54) scale(0.1)" text-anchor="start" font-size="59" fill="#181818" font-weight="bold">R8</text>
<text transform="translate(767.56,240.49) scale(0.1)" text-anchor="start" font-size="59" fill="#181818" font-weight="bold">(Res2a)</text>
<text transform="translate(796.4,193.75) scale(0.1)" text-anchor="start" font-size="59" fill="#181818" font-weight="bold">Q2</text>
<text transform="translate(796.4,202.7) scale(0.1)" text-anchor="start" font-size="59" fill="#181818" font-weight="bold">2SC3675</text>
<text transform="translate(803.36,231.54) scale(0.1)" text-anchor="start" font-size="59" fill="#181818" font-weight="bold">R9</text>
<text transform="translate(803.36,240.49) scale(0.1)" text-anchor="start" font-size="59" fill="#181818" font-weight="bold">(Res2a)</text>
<text transform="translate(832.2,193.75) scale(0.1)" text-anchor="start" font-size="59" fill="#181818" font-weight="bold">Q16</text>
<text transform="translate(832.2,202.7) scale(0.1)" text-anchor="start" font-size="59" fill="#181818" font-weight="bold">2SC3675</text>
<text transform="translate(839.16,231.54) scale(0.1)" text-anchor="start" font-size="59" fill="#181818" font-weight="bold">R26</text>
<text transform="translate(839.16,240.49) scale(0.1)" text-anchor="start" font-size="59" fill="#181818" font-weight="bold">(Res2a)</text>
</g>
</g>
<g filter="url(#soft2)">
<path d="M44,375.5 H48.6" stroke="#9a9a9a" stroke-width="0.7" fill="none"/>
<text transform="translate(5,378.95) scale(0.1)" font-size="90" fill="#d0d0d0" text-anchor="start" font-weight="bold" textLength="380" lengthAdjust="spacingAndGlyphs" stroke="#d0d0d0" stroke-width="2.8">14.030mA</text>
<path d="M44,390.82 H48.6" stroke="#9a9a9a" stroke-width="0.7" fill="none"/>
<text transform="translate(5,394.27) scale(0.1)" font-size="90" fill="#d0d0d0" text-anchor="start" font-weight="bold" textLength="380" lengthAdjust="spacingAndGlyphs" stroke="#d0d0d0" stroke-width="2.8">14.025mA</text>
<path d="M44,406.13 H48.6" stroke="#9a9a9a" stroke-width="0.7" fill="none"/>
<text transform="translate(5,409.58) scale(0.1)" font-size="90" fill="#d0d0d0" text-anchor="start" font-weight="bold" textLength="380" lengthAdjust="spacingAndGlyphs" stroke="#d0d0d0" stroke-width="2.8">14.020mA</text>
<path d="M44,421.45 H48.6" stroke="#9a9a9a" stroke-width="0.7" fill="none"/>
<text transform="translate(5,424.9) scale(0.1)" font-size="90" fill="#d0d0d0" text-anchor="start" font-weight="bold" textLength="380" lengthAdjust="spacingAndGlyphs" stroke="#d0d0d0" stroke-width="2.8">14.015mA</text>
<path d="M44,436.77 H48.6" stroke="#9a9a9a" stroke-width="0.7" fill="none"/>
<text transform="translate(5,440.22) scale(0.1)" font-size="90" fill="#d0d0d0" text-anchor="start" font-weight="bold" textLength="380" lengthAdjust="spacingAndGlyphs" stroke="#d0d0d0" stroke-width="2.8">14.010mA</text>
<path d="M44,452.08 H48.6" stroke="#9a9a9a" stroke-width="0.7" fill="none"/>
<text transform="translate(5,455.53) scale(0.1)" font-size="90" fill="#d0d0d0" text-anchor="start" font-weight="bold" textLength="380" lengthAdjust="spacingAndGlyphs" stroke="#d0d0d0" stroke-width="2.8">14.005mA</text>
<path d="M44,467.4 H48.6" stroke="#9a9a9a" stroke-width="0.7" fill="none"/>
<text transform="translate(5,470.85) scale(0.1)" font-size="90" fill="#d0d0d0" text-anchor="start" font-weight="bold" textLength="380" lengthAdjust="spacingAndGlyphs" stroke="#d0d0d0" stroke-width="2.8">14.000mA</text>
<path d="M44,482.72 H48.6" stroke="#9a9a9a" stroke-width="0.7" fill="none"/>
<text transform="translate(5,486.17) scale(0.1)" font-size="90" fill="#d0d0d0" text-anchor="start" font-weight="bold" textLength="380" lengthAdjust="spacingAndGlyphs" stroke="#d0d0d0" stroke-width="2.8">13.995mA</text>
<path d="M44,498.03 H48.6" stroke="#9a9a9a" stroke-width="0.7" fill="none"/>
<text transform="translate(5,501.48) scale(0.1)" font-size="90" fill="#d0d0d0" text-anchor="start" font-weight="bold" textLength="380" lengthAdjust="spacingAndGlyphs" stroke="#d0d0d0" stroke-width="2.8">13.990mA</text>
<path d="M44,513.35 H48.6" stroke="#9a9a9a" stroke-width="0.7" fill="none"/>
<text transform="translate(5,516.8) scale(0.1)" font-size="90" fill="#d0d0d0" text-anchor="start" font-weight="bold" textLength="380" lengthAdjust="spacingAndGlyphs" stroke="#d0d0d0" stroke-width="2.8">13.985mA</text>
<path d="M44,528.67 H48.6" stroke="#9a9a9a" stroke-width="0.7" fill="none"/>
<text transform="translate(5,532.12) scale(0.1)" font-size="90" fill="#d0d0d0" text-anchor="start" font-weight="bold" textLength="380" lengthAdjust="spacingAndGlyphs" stroke="#d0d0d0" stroke-width="2.8">13.980mA</text>
<path d="M44,543.98 H48.6" stroke="#9a9a9a" stroke-width="0.7" fill="none"/>
<text transform="translate(5,547.43) scale(0.1)" font-size="90" fill="#d0d0d0" text-anchor="start" font-weight="bold" textLength="380" lengthAdjust="spacingAndGlyphs" stroke="#d0d0d0" stroke-width="2.8">13.975mA</text>
<path d="M44,559.3 H48.6" stroke="#9a9a9a" stroke-width="0.7" fill="none"/>
<text transform="translate(5,562.75) scale(0.1)" font-size="90" fill="#d0d0d0" text-anchor="start" font-weight="bold" textLength="380" lengthAdjust="spacingAndGlyphs" stroke="#d0d0d0" stroke-width="2.8">13.970mA</text>
<path d="M48.6,559.3 V563.8" stroke="#9a9a9a" stroke-width="0.7" fill="none"/>
<text transform="translate(48.6,572.5) scale(0.1)" font-size="90" fill="#d0d0d0" text-anchor="middle" font-weight="bold" textLength="316" lengthAdjust="spacingAndGlyphs" stroke="#d0d0d0" stroke-width="2.8">17.80ms</text>
<path d="M141.68,559.3 V563.8" stroke="#9a9a9a" stroke-width="0.7" fill="none"/>
<text transform="translate(141.68,572.5) scale(0.1)" font-size="90" fill="#d0d0d0" text-anchor="middle" font-weight="bold" textLength="316" lengthAdjust="spacingAndGlyphs" stroke="#d0d0d0" stroke-width="2.8">17.85ms</text>
<path d="M234.76,559.3 V563.8" stroke="#9a9a9a" stroke-width="0.7" fill="none"/>
<text transform="translate(234.76,572.5) scale(0.1)" font-size="90" fill="#d0d0d0" text-anchor="middle" font-weight="bold" textLength="316" lengthAdjust="spacingAndGlyphs" stroke="#d0d0d0" stroke-width="2.8">17.90ms</text>
<path d="M327.84,559.3 V563.8" stroke="#9a9a9a" stroke-width="0.7" fill="none"/>
<text transform="translate(327.84,572.5) scale(0.1)" font-size="90" fill="#d0d0d0" text-anchor="middle" font-weight="bold" textLength="316" lengthAdjust="spacingAndGlyphs" stroke="#d0d0d0" stroke-width="2.8">17.95ms</text>
<path d="M420.92,559.3 V563.8" stroke="#9a9a9a" stroke-width="0.7" fill="none"/>
<text transform="translate(420.92,572.5) scale(0.1)" font-size="90" fill="#d0d0d0" text-anchor="middle" font-weight="bold" textLength="316" lengthAdjust="spacingAndGlyphs" stroke="#d0d0d0" stroke-width="2.8">18.00ms</text>
<path d="M514,559.3 V563.8" stroke="#9a9a9a" stroke-width="0.7" fill="none"/>
<text transform="translate(514,572.5) scale(0.1)" font-size="90" fill="#d0d0d0" text-anchor="middle" font-weight="bold" textLength="316" lengthAdjust="spacingAndGlyphs" stroke="#d0d0d0" stroke-width="2.8">18.05ms</text>
<path d="M607.08,559.3 V563.8" stroke="#9a9a9a" stroke-width="0.7" fill="none"/>
<text transform="translate(607.08,572.5) scale(0.1)" font-size="90" fill="#d0d0d0" text-anchor="middle" font-weight="bold" textLength="316" lengthAdjust="spacingAndGlyphs" stroke="#d0d0d0" stroke-width="2.8">18.10ms</text>
<path d="M700.16,559.3 V563.8" stroke="#9a9a9a" stroke-width="0.7" fill="none"/>
<text transform="translate(700.16,572.5) scale(0.1)" font-size="90" fill="#d0d0d0" text-anchor="middle" font-weight="bold" textLength="316" lengthAdjust="spacingAndGlyphs" stroke="#d0d0d0" stroke-width="2.8">18.15ms</text>
<path d="M793.24,559.3 V563.8" stroke="#9a9a9a" stroke-width="0.7" fill="none"/>
<text transform="translate(793.24,572.5) scale(0.1)" font-size="90" fill="#d0d0d0" text-anchor="middle" font-weight="bold" textLength="316" lengthAdjust="spacingAndGlyphs" stroke="#d0d0d0" stroke-width="2.8">18.20ms</text>
<path d="M886.32,559.3 V563.8" stroke="#9a9a9a" stroke-width="0.7" fill="none"/>
<text transform="translate(886.32,572.5) scale(0.1)" font-size="90" fill="#d0d0d0" text-anchor="middle" font-weight="bold" textLength="316" lengthAdjust="spacingAndGlyphs" stroke="#d0d0d0" stroke-width="2.8">18.25ms</text>
<rect x="48.6" y="375.5" width="930.1" height="183.8" fill="none" stroke="#8c8c8c" stroke-width="0.8"/>
<path d="M48.6,468.8 L49.26,470.59 L49.93,472.37 L50.59,474.16 L51.25,475.94 L51.91,477.72 L52.58,479.49 L53.24,481.26 L53.9,483.02 L54.56,484.78 L55.22,486.52 L55.87,488.26 L56.53,489.99 L57.19,491.7 L57.85,493.41 L58.5,495.1 L59.16,496.78 L59.82,498.45 L60.47,500.1 L61.12,501.74 L61.78,503.36 L62.43,504.96 L63.08,506.54 L63.74,508.11 L64.39,509.65 L65.04,511.17 L65.69,512.68 L66.34,514.16 L66.99,515.62 L67.64,517.05 L68.29,518.46 L68.94,519.85 L69.59,521.21 L70.24,522.54 L70.88,523.84 L71.53,525.12 L72.18,526.37 L72.82,527.59 L73.47,528.79 L74.12,529.95 L74.76,531.08 L75.41,532.18 L76.05,533.25 L76.69,534.28 L77.34,535.28 L77.98,536.25 L78.63,537.19 L79.27,538.09 L79.91,538.95 L80.55,539.78 L81.2,540.58 L81.84,541.34 L82.48,542.06 L83.12,542.74 L83.76,543.39 L84.4,544 L85.04,544.58 L85.69,545.11 L86.33,545.61 L86.97,546.06 L87.61,546.48 L88.25,546.86 L88.89,547.2 L89.53,547.51 L90.17,547.77 L90.81,547.99 L91.45,548.17 L92.09,548.31 L92.73,548.42 L93.37,548.48 L94.01,548.5 L94.65,548.48 L95.29,548.42 L95.93,548.33 L96.57,548.19 L97.21,548.01 L97.84,547.79 L98.48,547.53 L99.12,547.24 L99.77,546.9 L100.41,546.53 L101.05,546.11 L101.69,545.66 L102.33,545.16 L102.97,544.63 L103.61,544.07 L104.25,543.46 L104.89,542.81 L105.53,542.13 L106.17,541.41 L106.82,540.66 L107.46,539.87 L108.1,539.04 L108.74,538.18 L109.39,537.28 L110.03,536.35 L110.67,535.39 L111.32,534.39 L111.96,533.36 L112.61,532.29 L113.25,531.2 L113.9,530.07 L114.54,528.91 L115.19,527.72 L115.83,526.5 L116.48,525.26 L117.13,523.98 L117.78,522.68 L118.42,521.35 L119.07,519.99 L119.72,518.61 L120.37,517.2 L121.02,515.77 L121.67,514.31 L122.32,512.83 L122.97,511.33 L123.62,509.81 L124.27,508.27 L124.93,506.71 L125.58,505.13 L126.23,503.53 L126.89,501.91 L127.54,500.27 L128.2,498.63 L128.85,496.96 L129.51,495.28 L130.16,493.59 L130.82,491.89 L131.48,490.17 L132.14,488.44 L132.79,486.71 L133.45,484.96 L134.11,483.21 L134.77,481.44 L135.43,479.68 L136.1,477.9 L136.76,476.13 L137.42,474.35 L138.08,472.56 L138.75,470.78 L139.41,468.99 L140.07,467.2 L140.74,465.42 L141.41,463.63 L142.07,461.85 L142.74,460.07 L143.41,458.3 L144.07,456.53 L144.74,454.76 L145.41,453.01 L146.08,451.26 L146.75,449.52 L147.42,447.79 L148.09,446.08 L148.76,444.37 L149.44,442.67 L150.11,440.99 L150.78,439.32 L151.46,437.67 L152.13,436.03 L152.8,434.41 L153.48,432.81 L154.16,431.22 L154.83,429.66 L155.51,428.11 L156.19,426.59 L156.86,425.08 L157.54,423.6 L158.22,422.14 L158.9,420.7 L159.58,419.29 L160.26,417.9 L160.94,416.54 L161.62,415.2 L162.3,413.89 L162.98,412.61 L163.66,411.36 L164.35,410.13 L165.03,408.94 L165.71,407.77 L166.4,406.64 L167.08,405.54 L167.76,404.47 L168.45,403.43 L169.13,402.42 L169.82,401.45 L170.5,400.51 L171.19,399.61 L171.87,398.74 L172.56,397.9 L173.25,397.1 L173.93,396.34 L174.62,395.62 L175.31,394.93 L176,394.27 L176.68,393.66 L177.37,393.08 L178.06,392.54 L178.75,392.04 L179.43,391.58 L180.12,391.16 L180.81,390.77 L181.5,390.43 L182.19,390.12 L182.88,389.86 L183.57,389.63 L184.26,389.45 L184.94,389.3 L185.63,389.19 L186.32,389.13 L187.01,389.1 L187.7,389.11 L188.39,389.17 L189.08,389.26 L189.77,389.4 L190.46,389.57 L191.14,389.78 L191.83,390.04 L192.52,390.33 L193.21,390.66 L193.9,391.03 L194.59,391.44 L195.28,391.89 L195.96,392.38 L196.65,392.91 L197.34,393.47 L198.03,394.08 L198.71,394.72 L199.4,395.39 L200.09,396.11 L200.78,396.86 L201.46,397.65 L202.15,398.47 L202.83,399.33 L203.52,400.22 L204.21,401.15 L204.89,402.11 L205.58,403.11 L206.26,404.13 L206.94,405.19 L207.63,406.29 L208.31,407.41 L208.99,408.57 L209.68,409.75 L210.36,410.97 L211.04,412.21 L211.72,413.48 L212.41,414.78 L213.09,416.11 L213.77,417.47 L214.45,418.85 L215.13,420.25 L215.81,421.68 L216.48,423.13 L217.16,424.61 L217.84,426.11 L218.52,427.63 L219.19,429.17 L219.87,430.73 L220.55,432.31 L221.22,433.9 L221.9,435.52 L222.57,437.15 L223.25,438.8 L223.92,440.46 L224.59,442.14 L225.26,443.83 L225.94,445.53 L226.61,447.25 L227.28,448.98 L227.95,450.71 L228.62,452.46 L229.29,454.21 L229.96,455.97 L230.62,457.74 L231.29,459.51 L231.96,461.29 L232.62,463.07 L233.29,464.85 L233.96,466.64 L234.62,468.42 L235.28,470.21 L235.95,472 L236.61,473.78 L237.27,475.56 L237.94,477.34 L238.6,479.12 L239.26,480.89 L239.92,482.65 L240.58,484.41 L241.24,486.15 L241.9,487.89 L242.55,489.62 L243.21,491.34 L243.87,493.05 L244.53,494.75 L245.18,496.43 L245.84,498.1 L246.49,499.76 L247.15,501.39 L247.8,503.02 L248.45,504.62 L249.11,506.21 L249.76,507.78 L250.41,509.33 L251.06,510.86 L251.71,512.36 L252.37,513.85 L253.02,515.31 L253.67,516.75 L254.31,518.17 L254.96,519.56 L255.61,520.92 L256.26,522.26 L256.91,523.57 L257.55,524.86 L258.2,526.11 L258.85,527.34 L259.49,528.54 L260.14,529.71 L260.78,530.84 L261.43,531.95 L262.07,533.02 L262.72,534.07 L263.36,535.07 L264.01,536.05 L264.65,536.99 L265.29,537.9 L265.94,538.77 L266.58,539.61 L267.22,540.41 L267.86,541.18 L268.5,541.91 L269.15,542.6 L269.79,543.26 L270.43,543.88 L271.07,544.46 L271.71,545 L272.35,545.51 L272.99,545.97 L273.63,546.4 L274.27,546.79 L274.91,547.14 L275.55,547.45 L276.19,547.72 L276.83,547.95 L277.47,548.14 L278.11,548.29 L278.75,548.4 L279.39,548.47 L280.03,548.5 L280.67,548.49 L281.31,548.44 L281.95,548.35 L282.59,548.22 L283.23,548.05 L283.87,547.84 L284.51,547.59 L285.15,547.3 L285.79,546.98 L286.43,546.61 L287.07,546.2 L287.71,545.76 L288.35,545.27 L288.99,544.75 L289.63,544.19 L290.27,543.59 L290.92,542.95 L291.56,542.28 L292.2,541.57 L292.84,540.82 L293.48,540.04 L294.13,539.22 L294.77,538.36 L295.41,537.48 L296.05,536.55 L296.7,535.59 L297.34,534.6 L297.99,533.58 L298.63,532.52 L299.28,531.43 L299.92,530.31 L300.57,529.16 L301.21,527.97 L301.86,526.76 L302.5,525.52 L303.15,524.25 L303.8,522.95 L304.45,521.63 L305.1,520.28 L305.74,518.9 L306.39,517.5 L307.04,516.07 L307.69,514.62 L308.34,513.15 L308.99,511.65 L309.64,510.13 L310.3,508.6 L310.95,507.04 L311.6,505.46 L312.26,503.86 L312.91,502.25 L313.56,500.62 L314.22,498.97 L314.87,497.31 L315.53,495.64 L316.19,493.95 L316.84,492.25 L317.5,490.53 L318.16,488.81 L318.82,487.07 L319.47,485.33 L320.13,483.58 L320.79,481.82 L321.45,480.05 L322.12,478.28 L322.78,476.5 L323.44,474.72 L324.1,472.94 L324.77,471.15 L325.43,469.36 L326.09,467.58 L326.76,465.79 L327.43,464.01 L328.09,462.22 L328.76,460.44 L329.43,458.67 L330.09,456.9 L330.76,455.14 L331.43,453.38 L332.1,451.63 L332.77,449.89 L333.44,448.16 L334.11,446.44 L334.78,444.73 L335.45,443.03 L336.13,441.35 L336.8,439.67 L337.47,438.02 L338.15,436.38 L338.82,434.75 L339.5,433.15 L340.17,431.56 L340.85,429.99 L341.53,428.44 L342.2,426.91 L342.88,425.4 L343.56,423.91 L344.24,422.44 L344.92,421 L345.6,419.58 L346.28,418.19 L346.96,416.82 L347.64,415.48 L348.32,414.17 L349,412.88 L349.68,411.62 L350.36,410.39 L351.05,409.19 L351.73,408.02 L352.41,406.88 L353.1,405.77 L353.78,404.69 L354.46,403.64 L355.15,402.63 L355.83,401.65 L356.52,400.71 L357.2,399.79 L357.89,398.92 L358.58,398.08 L359.26,397.27 L359.95,396.5 L360.64,395.77 L361.32,395.07 L362.01,394.41 L362.7,393.79 L363.39,393.2 L364.07,392.65 L364.76,392.15 L365.45,391.68 L366.14,391.24 L366.83,390.85 L367.51,390.5 L368.2,390.19 L368.89,389.91 L369.58,389.68 L370.27,389.48 L370.96,389.33 L371.65,389.21 L372.34,389.14 L373.03,389.1 L373.71,389.11 L374.4,389.15 L375.09,389.24 L375.78,389.36 L376.47,389.53 L377.16,389.73 L377.85,389.98 L378.54,390.26 L379.23,390.59 L379.91,390.95 L380.6,391.35 L381.29,391.8 L381.98,392.28 L382.67,392.79 L383.35,393.35 L384.04,393.95 L384.73,394.58 L385.42,395.25 L386.1,395.95 L386.79,396.7 L387.48,397.48 L388.16,398.29 L388.85,399.14 L389.54,400.03 L390.22,400.95 L390.91,401.9 L391.59,402.89 L392.28,403.91 L392.96,404.97 L393.64,406.05 L394.33,407.17 L395.01,408.32 L395.69,409.5 L396.38,410.71 L397.06,411.95 L397.74,413.21 L398.42,414.51 L399.1,415.83 L399.78,417.18 L400.46,418.55 L401.14,419.95 L401.82,421.38 L402.5,422.82 L403.18,424.3 L403.86,425.79 L404.53,427.3 L405.21,428.84 L405.89,430.4 L406.56,431.97 L407.24,433.57 L407.91,435.18 L408.59,436.81 L409.26,438.45 L409.94,440.11 L410.61,441.79 L411.28,443.47 L411.95,445.17 L412.63,446.89 L413.3,448.61 L413.97,450.34 L414.64,452.09 L415.31,453.84 L415.97,455.6 L416.64,457.36 L417.31,459.14 L417.98,460.91 L418.64,462.69 L419.31,464.47 L419.98,466.26 L420.64,468.05 L421.3,469.83 L421.97,471.62 L422.63,473.41 L423.29,475.19 L423.96,476.97 L424.62,478.74 L425.28,480.51 L425.94,482.28 L426.6,484.04 L427.26,485.79 L427.92,487.53 L428.58,489.26 L429.23,490.98 L429.89,492.69 L430.55,494.39 L431.2,496.08 L431.86,497.75 L432.51,499.41 L433.17,501.05 L433.82,502.68 L434.48,504.29 L435.13,505.88 L435.78,507.45 L436.43,509 L437.09,510.53 L437.74,512.05 L438.39,513.54 L439.04,515 L439.69,516.45 L440.34,517.87 L440.99,519.27 L441.63,520.64 L442.28,521.98 L442.93,523.3 L443.58,524.59 L444.22,525.85 L444.87,527.08 L445.52,528.29 L446.16,529.46 L446.81,530.61 L447.45,531.72 L448.1,532.8 L448.74,533.85 L449.39,534.86 L450.03,535.85 L450.67,536.8 L451.32,537.71 L451.96,538.59 L452.6,539.44 L453.25,540.25 L453.89,541.02 L454.53,541.76 L455.17,542.46 L455.81,543.12 L456.45,543.75 L457.09,544.34 L457.74,544.89 L458.38,545.4 L459.02,545.88 L459.66,546.31 L460.3,546.71 L460.94,547.07 L461.58,547.38 L462.22,547.66 L462.86,547.9 L463.5,548.1 L464.14,548.26 L464.78,548.38 L465.42,548.46 L466.06,548.5 L466.7,548.49 L467.34,548.45 L467.98,548.37 L468.62,548.25 L469.26,548.09 L469.9,547.89 L470.54,547.65 L471.18,547.37 L471.82,547.05 L472.46,546.69 L473.1,546.29 L473.74,545.85 L474.38,545.38 L475.02,544.86 L475.66,544.31 L476.3,543.72 L476.94,543.09 L477.58,542.42 L478.22,541.72 L478.87,540.98 L479.51,540.21 L480.15,539.39 L480.79,538.55 L481.44,537.67 L482.08,536.75 L482.72,535.8 L483.37,534.81 L484.01,533.79 L484.65,532.74 L485.3,531.66 L485.94,530.55 L486.59,529.4 L487.24,528.23 L487.88,527.02 L488.53,525.79 L489.18,524.52 L489.82,523.23 L490.47,521.91 L491.12,520.57 L491.77,519.19 L492.42,517.8 L493.07,516.37 L493.72,514.93 L494.37,513.46 L495.02,511.97 L495.67,510.46 L496.32,508.92 L496.97,507.37 L497.62,505.79 L498.28,504.2 L498.93,502.59 L499.59,500.97 L500.24,499.32 L500.89,497.66 L501.55,495.99 L502.21,494.3 L502.86,492.61 L503.52,490.89 L504.18,489.17 L504.84,487.44 L505.5,485.7 L506.16,483.95 L506.82,482.19 L507.48,480.42 L508.14,478.65 L508.8,476.88 L509.46,475.1 L510.12,473.31 L510.79,471.53 L511.45,469.74 L512.11,467.95 L512.78,466.17 L513.44,464.38 L514.11,462.6 L514.78,460.82 L515.44,459.04 L516.11,457.27 L516.78,455.51 L517.45,453.75 L518.12,452 L518.79,450.25 L519.46,448.52 L520.13,446.8 L520.8,445.09 L521.47,443.39 L522.15,441.7 L522.82,440.03 L523.49,438.37 L524.17,436.72 L524.84,435.09 L525.52,433.48 L526.19,431.89 L526.87,430.32 L527.54,428.76 L528.22,427.23 L528.9,425.71 L529.58,424.22 L530.25,422.75 L530.93,421.3 L531.61,419.88 L532.29,418.48 L532.97,417.11 L533.65,415.76 L534.33,414.44 L535.02,413.15 L535.7,411.88 L536.38,410.65 L537.06,409.44 L537.74,408.26 L538.43,407.11 L539.11,406 L539.8,404.91 L540.48,403.86 L541.16,402.84 L541.85,401.85 L542.53,400.9 L543.22,399.98 L543.91,399.1 L544.59,398.25 L545.28,397.44 L545.96,396.66 L546.65,395.92 L547.34,395.21 L548.03,394.54 L548.71,393.91 L549.4,393.32 L550.09,392.77 L550.78,392.25 L551.46,391.77 L552.15,391.33 L552.84,390.93 L553.53,390.57 L554.22,390.25 L554.91,389.97 L555.6,389.72 L556.28,389.52 L556.97,389.36 L557.66,389.23 L558.35,389.15 L559.04,389.11 L559.73,389.1 L560.42,389.14 L561.11,389.22 L561.8,389.33 L562.49,389.49 L563.17,389.69 L563.86,389.92 L564.55,390.2 L565.24,390.52 L565.93,390.87 L566.62,391.27 L567.31,391.7 L567.99,392.17 L568.68,392.68 L569.37,393.23 L570.06,393.82 L570.74,394.44 L571.43,395.1 L572.12,395.8 L572.81,396.54 L573.49,397.31 L574.18,398.12 L574.87,398.96 L575.55,399.84 L576.24,400.75 L576.92,401.7 L577.61,402.68 L578.29,403.7 L578.98,404.74 L579.66,405.82 L580.34,406.93 L581.03,408.08 L581.71,409.25 L582.39,410.45 L583.07,411.68 L583.76,412.94 L584.44,414.23 L585.12,415.55 L585.8,416.89 L586.48,418.26 L587.16,419.66 L587.84,421.07 L588.52,422.52 L589.2,423.98 L589.87,425.47 L590.55,426.98 L591.23,428.52 L591.91,430.07 L592.58,431.64 L593.26,433.23 L593.93,434.84 L594.61,436.46 L595.28,438.1 L595.95,439.76 L596.63,441.43 L597.3,443.12 L597.97,444.82 L598.64,446.53 L599.31,448.25 L599.99,449.98 L600.66,451.72 L601.32,453.47 L601.99,455.23 L602.66,456.99 L603.33,458.76 L604,460.54 L604.66,462.32 L605.33,464.1 L605.99,465.88 L606.66,467.67 L607.32,469.46 L607.99,471.24 L608.65,473.03 L609.31,474.81 L609.98,476.59 L610.64,478.37 L611.3,480.14 L611.96,481.91 L612.62,483.67 L613.28,485.42 L613.94,487.16 L614.6,488.9 L615.25,490.62 L615.91,492.33 L616.57,494.04 L617.23,495.72 L617.88,497.4 L618.54,499.06 L619.19,500.71 L619.85,502.33 L620.5,503.95 L621.15,505.54 L621.8,507.12 L622.46,508.68 L623.11,510.21 L623.76,511.73 L624.41,513.22 L625.06,514.7 L625.71,516.15 L626.36,517.57 L627.01,518.97 L627.66,520.35 L628.31,521.7 L628.95,523.02 L629.6,524.32 L630.25,525.59 L630.9,526.83 L631.54,528.04 L632.19,529.22 L632.83,530.37 L633.48,531.49 L634.12,532.57 L634.77,533.63 L635.41,534.65 L636.06,535.64 L636.7,536.6 L637.34,537.52 L637.98,538.41 L638.63,539.26 L639.27,540.08 L639.91,540.86 L640.55,541.61 L641.2,542.32 L641.84,542.99 L642.48,543.62 L643.12,544.22 L643.76,544.78 L644.4,545.3 L645.04,545.78 L645.68,546.22 L646.32,546.63 L646.96,546.99 L647.6,547.32 L648.24,547.61 L648.88,547.85 L649.52,548.06 L650.16,548.23 L650.8,548.36 L651.44,548.44 L652.08,548.49 L652.72,548.5 L653.36,548.47 L654,548.39 L654.64,548.28 L655.28,548.13 L655.92,547.93 L656.56,547.7 L657.2,547.43 L657.84,547.12 L658.48,546.77 L659.12,546.38 L659.76,545.95 L660.4,545.48 L661.04,544.97 L661.68,544.43 L662.32,543.85 L662.97,543.23 L663.61,542.57 L664.25,541.87 L664.89,541.14 L665.53,540.37 L666.17,539.57 L666.82,538.73 L667.46,537.85 L668.1,536.94 L668.75,536 L669.39,535.02 L670.03,534.01 L670.68,532.97 L671.32,531.89 L671.97,530.78 L672.61,529.65 L673.26,528.48 L673.91,527.28 L674.55,526.05 L675.2,524.79 L675.85,523.5 L676.49,522.19 L677.14,520.85 L677.79,519.48 L678.44,518.09 L679.09,516.68 L679.74,515.24 L680.39,513.77 L681.04,512.28 L681.69,510.78 L682.34,509.25 L682.99,507.7 L683.65,506.13 L684.3,504.54 L684.95,502.93 L685.61,501.31 L686.26,499.67 L686.92,498.01 L687.57,496.34 L688.23,494.66 L688.89,492.96 L689.54,491.26 L690.2,489.54 L690.86,487.8 L691.52,486.06 L692.18,484.32 L692.84,482.56 L693.5,480.8 L694.16,479.03 L694.82,477.25 L695.48,475.47 L696.14,473.69 L696.81,471.9 L697.47,470.12 L698.13,468.33 L698.8,466.54 L699.46,464.76 L700.13,462.97 L700.8,461.19 L701.46,459.42 L702.13,457.65 L702.8,455.88 L703.47,454.12 L704.14,452.37 L704.81,450.62 L705.48,448.89 L706.15,447.16 L706.82,445.45 L707.49,443.74 L708.16,442.05 L708.84,440.38 L709.51,438.71 L710.18,437.07 L710.86,435.44 L711.53,433.82 L712.21,432.22 L712.88,430.65 L713.56,429.09 L714.24,427.55 L714.92,426.03 L715.59,424.53 L716.27,423.06 L716.95,421.61 L717.63,420.18 L718.31,418.77 L718.99,417.39 L719.67,416.04 L720.35,414.72 L721.03,413.42 L721.71,412.15 L722.4,410.9 L723.08,409.69 L723.76,408.51 L724.44,407.35 L725.13,406.23 L725.81,405.14 L726.5,404.08 L727.18,403.05 L727.86,402.06 L728.55,401.1 L729.24,400.17 L729.92,399.28 L730.61,398.43 L731.29,397.6 L731.98,396.82 L732.67,396.07 L733.35,395.36 L734.04,394.68 L734.73,394.04 L735.42,393.44 L736.1,392.88 L736.79,392.36 L737.48,391.87 L738.17,391.42 L738.86,391.01 L739.54,390.64 L740.23,390.31 L740.92,390.02 L741.61,389.77 L742.3,389.56 L742.99,389.39 L743.68,389.26 L744.37,389.16 L745.06,389.11 L745.74,389.1 L746.43,389.13 L747.12,389.2 L747.81,389.31 L748.5,389.45 L749.19,389.64 L749.88,389.87 L750.57,390.14 L751.26,390.45 L751.94,390.79 L752.63,391.18 L753.32,391.6 L754.01,392.07 L754.7,392.57 L755.38,393.11 L756.07,393.69 L756.76,394.31 L757.45,394.96 L758.13,395.65 L758.82,396.38 L759.51,397.14 L760.19,397.94 L760.88,398.78 L761.57,399.65 L762.25,400.56 L762.94,401.5 L763.62,402.47 L764.31,403.48 L764.99,404.52 L765.68,405.59 L766.36,406.7 L767.04,407.83 L767.73,409 L768.41,410.2 L769.09,411.42 L769.77,412.68 L770.45,413.96 L771.14,415.27 L771.82,416.61 L772.5,417.97 L773.18,419.36 L773.86,420.77 L774.53,422.21 L775.21,423.67 L775.89,425.16 L776.57,426.66 L777.25,428.19 L777.92,429.74 L778.6,431.31 L779.27,432.89 L779.95,434.5 L780.62,436.12 L781.3,437.76 L781.97,439.41 L782.65,441.08 L783.32,442.76 L783.99,444.46 L784.66,446.16 L785.33,447.88 L786,449.61 L786.67,451.35 L787.34,453.1 L788.01,454.86 L788.68,456.62 L789.35,458.39 L790.02,460.16 L790.68,461.94 L791.35,463.72 L792.01,465.51 L792.68,467.29 L793.34,469.08 L794.01,470.87 L794.67,472.65 L795.33,474.44 L796,476.22 L796.66,478 L797.32,479.77 L797.98,481.54 L798.64,483.3 L799.3,485.05 L799.96,486.8 L800.62,488.53 L801.28,490.26 L801.93,491.97 L802.59,493.68 L803.25,495.37 L803.9,497.05 L804.56,498.71 L805.21,500.36 L805.87,501.99 L806.52,503.61 L807.17,505.21 L807.83,506.79 L808.48,508.35 L809.13,509.89 L809.78,511.41 L810.43,512.91 L811.08,514.39 L811.73,515.84 L812.38,517.27 L813.03,518.68 L813.68,520.06 L814.33,521.42 L814.98,522.75 L815.63,524.05 L816.27,525.32 L816.92,526.57 L817.57,527.78 L818.21,528.97 L818.86,530.13 L819.5,531.25 L820.15,532.35 L820.79,533.41 L821.44,534.44 L822.08,535.44 L822.72,536.4 L823.37,537.33 L824.01,538.23 L824.65,539.09 L825.29,539.91 L825.94,540.7 L826.58,541.45 L827.22,542.17 L827.86,542.85 L828.5,543.49 L829.14,544.1 L829.79,544.66 L830.43,545.19 L831.07,545.68 L831.71,546.13 L832.35,546.55 L832.99,546.92 L833.63,547.25 L834.27,547.55 L834.91,547.8 L835.55,548.02 L836.19,548.2 L836.83,548.33 L837.47,548.43 L838.11,548.48 L838.75,548.5 L839.39,548.48 L840.03,548.41 L840.67,548.31 L841.31,548.16 L841.95,547.98 L842.59,547.75 L843.23,547.49 L843.87,547.19 L844.51,546.84 L845.15,546.46 L845.79,546.04 L846.43,545.58 L847.07,545.08 L847.71,544.55 L848.35,543.97 L848.99,543.36 L849.63,542.71 L850.27,542.02 L850.92,541.3 L851.56,540.54 L852.2,539.74 L852.84,538.91 L853.48,538.04 L854.13,537.14 L854.77,536.2 L855.41,535.23 L856.06,534.23 L856.7,533.19 L857.35,532.12 L857.99,531.02 L858.64,529.89 L859.28,528.73 L859.93,527.53 L860.58,526.31 L861.22,525.06 L861.87,523.78 L862.52,522.47 L863.17,521.14 L863.81,519.77 L864.46,518.39 L865.11,516.98 L865.76,515.54 L866.41,514.08 L867.06,512.6 L867.71,511.1 L868.36,509.57 L869.02,508.03 L869.67,506.46 L870.32,504.88 L870.98,503.27 L871.63,501.65 L872.28,500.02 L872.94,498.36 L873.59,496.7 L874.25,495.02 L874.91,493.32 L875.56,491.62 L876.22,489.9 L876.88,488.17 L877.54,486.43 L878.2,484.68 L878.86,482.93 L879.52,481.17 L880.18,479.4 L880.84,477.63 L881.5,475.85 L882.16,474.07 L882.83,472.28 L883.49,470.49 L884.15,468.71 L884.82,466.92 L885.48,465.13 L886.15,463.35 L886.82,461.57 L887.48,459.79 L888.15,458.02 L888.82,456.25 L889.49,454.49 L890.16,452.73 L890.83,450.99 L891.5,449.25 L892.17,447.52 L892.84,445.81 L893.51,444.1 L894.18,442.41 L894.85,440.73 L895.53,439.06 L896.2,437.41 L896.88,435.78 L897.55,434.16 L898.23,432.56 L898.9,430.98 L899.58,429.41 L900.26,427.87 L900.93,426.35 L901.61,424.85 L902.29,423.37 L902.97,421.91 L903.65,420.48 L904.33,419.07 L905.01,417.68 L905.69,416.33 L906.37,414.99 L907.05,413.69 L907.73,412.41 L908.41,411.16 L909.09,409.94 L909.78,408.75 L910.46,407.59 L911.14,406.46 L911.83,405.37 L912.51,404.3 L913.2,403.27 L913.88,402.27 L914.57,401.3 L915.25,400.37 L915.94,399.47 L916.62,398.6 L917.31,397.77 L918,396.98 L918.68,396.23 L919.37,395.5 L920.06,394.82 L920.74,394.18 L921.43,393.57 L922.12,393 L922.81,392.46 L923.49,391.97 L924.18,391.51 L924.87,391.1 L925.56,390.72 L926.25,390.38 L926.94,390.08 L927.63,389.82 L928.31,389.6 L929,389.42 L929.69,389.28 L930.38,389.18 L931.07,389.12 L931.76,389.1 L932.45,389.12 L933.14,389.18 L933.83,389.28 L934.52,389.42 L935.2,389.6 L935.89,389.82 L936.58,390.08 L937.27,390.38 L937.96,390.72 L938.65,391.09 L939.34,391.51 L940.02,391.97 L940.71,392.46 L941.4,392.99 L942.09,393.57 L942.78,394.17 L943.46,394.82 L944.15,395.5 L944.84,396.22 L945.52,396.98 L946.21,397.77 L946.9,398.6 L947.58,399.47 L948.27,400.36 L948.95,401.3 L949.64,402.26 L950.32,403.26 L951.01,404.3 L951.69,405.36 L952.38,406.46 L953.06,407.59 L953.74,408.75 L954.42,409.94 L955.11,411.16 L955.79,412.41 L956.47,413.69 L957.15,414.99 L957.83,416.32 L958.51,417.68 L959.19,419.06 L959.87,420.47 L960.55,421.91 L961.23,423.36 L961.91,424.84 L962.59,426.34 L963.26,427.87 L963.94,429.41 L964.62,430.97 L965.29,432.56 L965.97,434.16 L966.64,435.78 L967.32,437.41 L967.99,439.06 L968.66,440.73 L969.34,442.41 L970.01,444.1 L970.68,445.8 L971.35,447.52 L972.02,449.25 L972.69,450.98 L973.36,452.73 L974.03,454.49 L974.7,456.25 L975.37,458.01 L976.04,459.79 L976.7,461.57 L977.37,463.35 L978.03,465.13 L978.7,466.92" stroke="#1c1ca8" stroke-width="1.8" fill="none" opacity="0.28" transform="translate(0.3,0.9)"/>
<path d="M48.6,468.8 L49.26,470.59 L49.93,472.37 L50.59,474.16 L51.25,475.94 L51.91,477.72 L52.58,479.49 L53.24,481.26 L53.9,483.02 L54.56,484.78 L55.22,486.52 L55.87,488.26 L56.53,489.99 L57.19,491.7 L57.85,493.41 L58.5,495.1 L59.16,496.78 L59.82,498.45 L60.47,500.1 L61.12,501.74 L61.78,503.36 L62.43,504.96 L63.08,506.54 L63.74,508.11 L64.39,509.65 L65.04,511.17 L65.69,512.68 L66.34,514.16 L66.99,515.62 L67.64,517.05 L68.29,518.46 L68.94,519.85 L69.59,521.21 L70.24,522.54 L70.88,523.84 L71.53,525.12 L72.18,526.37 L72.82,527.59 L73.47,528.79 L74.12,529.95 L74.76,531.08 L75.41,532.18 L76.05,533.25 L76.69,534.28 L77.34,535.28 L77.98,536.25 L78.63,537.19 L79.27,538.09 L79.91,538.95 L80.55,539.78 L81.2,540.58 L81.84,541.34 L82.48,542.06 L83.12,542.74 L83.76,543.39 L84.4,544 L85.04,544.58 L85.69,545.11 L86.33,545.61 L86.97,546.06 L87.61,546.48 L88.25,546.86 L88.89,547.2 L89.53,547.51 L90.17,547.77 L90.81,547.99 L91.45,548.17 L92.09,548.31 L92.73,548.42 L93.37,548.48 L94.01,548.5 L94.65,548.48 L95.29,548.42 L95.93,548.33 L96.57,548.19 L97.21,548.01 L97.84,547.79 L98.48,547.53 L99.12,547.24 L99.77,546.9 L100.41,546.53 L101.05,546.11 L101.69,545.66 L102.33,545.16 L102.97,544.63 L103.61,544.07 L104.25,543.46 L104.89,542.81 L105.53,542.13 L106.17,541.41 L106.82,540.66 L107.46,539.87 L108.1,539.04 L108.74,538.18 L109.39,537.28 L110.03,536.35 L110.67,535.39 L111.32,534.39 L111.96,533.36 L112.61,532.29 L113.25,531.2 L113.9,530.07 L114.54,528.91 L115.19,527.72 L115.83,526.5 L116.48,525.26 L117.13,523.98 L117.78,522.68 L118.42,521.35 L119.07,519.99 L119.72,518.61 L120.37,517.2 L121.02,515.77 L121.67,514.31 L122.32,512.83 L122.97,511.33 L123.62,509.81 L124.27,508.27 L124.93,506.71 L125.58,505.13 L126.23,503.53 L126.89,501.91 L127.54,500.27 L128.2,498.63 L128.85,496.96 L129.51,495.28 L130.16,493.59 L130.82,491.89 L131.48,490.17 L132.14,488.44 L132.79,486.71 L133.45,484.96 L134.11,483.21 L134.77,481.44 L135.43,479.68 L136.1,477.9 L136.76,476.13 L137.42,474.35 L138.08,472.56 L138.75,470.78 L139.41,468.99 L140.07,467.2 L140.74,465.42 L141.41,463.63 L142.07,461.85 L142.74,460.07 L143.41,458.3 L144.07,456.53 L144.74,454.76 L145.41,453.01 L146.08,451.26 L146.75,449.52 L147.42,447.79 L148.09,446.08 L148.76,444.37 L149.44,442.67 L150.11,440.99 L150.78,439.32 L151.46,437.67 L152.13,436.03 L152.8,434.41 L153.48,432.81 L154.16,431.22 L154.83,429.66 L155.51,428.11 L156.19,426.59 L156.86,425.08 L157.54,423.6 L158.22,422.14 L158.9,420.7 L159.58,419.29 L160.26,417.9 L160.94,416.54 L161.62,415.2 L162.3,413.89 L162.98,412.61 L163.66,411.36 L164.35,410.13 L165.03,408.94 L165.71,407.77 L166.4,406.64 L167.08,405.54 L167.76,404.47 L168.45,403.43 L169.13,402.42 L169.82,401.45 L170.5,400.51 L171.19,399.61 L171.87,398.74 L172.56,397.9 L173.25,397.1 L173.93,396.34 L174.62,395.62 L175.31,394.93 L176,394.27 L176.68,393.66 L177.37,393.08 L178.06,392.54 L178.75,392.04 L179.43,391.58 L180.12,391.16 L180.81,390.77 L181.5,390.43 L182.19,390.12 L182.88,389.86 L183.57,389.63 L184.26,389.45 L184.94,389.3 L185.63,389.19 L186.32,389.13 L187.01,389.1 L187.7,389.11 L188.39,389.17 L189.08,389.26 L189.77,389.4 L190.46,389.57 L191.14,389.78 L191.83,390.04 L192.52,390.33 L193.21,390.66 L193.9,391.03 L194.59,391.44 L195.28,391.89 L195.96,392.38 L196.65,392.91 L197.34,393.47 L198.03,394.08 L198.71,394.72 L199.4,395.39 L200.09,396.11 L200.78,396.86 L201.46,397.65 L202.15,398.47 L202.83,399.33 L203.52,400.22 L204.21,401.15 L204.89,402.11 L205.58,403.11 L206.26,404.13 L206.94,405.19 L207.63,406.29 L208.31,407.41 L208.99,408.57 L209.68,409.75 L210.36,410.97 L211.04,412.21 L211.72,413.48 L212.41,414.78 L213.09,416.11 L213.77,417.47 L214.45,418.85 L215.13,420.25 L215.81,421.68 L216.48,423.13 L217.16,424.61 L217.84,426.11 L218.52,427.63 L219.19,429.17 L219.87,430.73 L220.55,432.31 L221.22,433.9 L221.9,435.52 L222.57,437.15 L223.25,438.8 L223.92,440.46 L224.59,442.14 L225.26,443.83 L225.94,445.53 L226.61,447.25 L227.28,448.98 L227.95,450.71 L228.62,452.46 L229.29,454.21 L229.96,455.97 L230.62,457.74 L231.29,459.51 L231.96,461.29 L232.62,463.07 L233.29,464.85 L233.96,466.64 L234.62,468.42 L235.28,470.21 L235.95,472 L236.61,473.78 L237.27,475.56 L237.94,477.34 L238.6,479.12 L239.26,480.89 L239.92,482.65 L240.58,484.41 L241.24,486.15 L241.9,487.89 L242.55,489.62 L243.21,491.34 L243.87,493.05 L244.53,494.75 L245.18,496.43 L245.84,498.1 L246.49,499.76 L247.15,501.39 L247.8,503.02 L248.45,504.62 L249.11,506.21 L249.76,507.78 L250.41,509.33 L251.06,510.86 L251.71,512.36 L252.37,513.85 L253.02,515.31 L253.67,516.75 L254.31,518.17 L254.96,519.56 L255.61,520.92 L256.26,522.26 L256.91,523.57 L257.55,524.86 L258.2,526.11 L258.85,527.34 L259.49,528.54 L260.14,529.71 L260.78,530.84 L261.43,531.95 L262.07,533.02 L262.72,534.07 L263.36,535.07 L264.01,536.05 L264.65,536.99 L265.29,537.9 L265.94,538.77 L266.58,539.61 L267.22,540.41 L267.86,541.18 L268.5,541.91 L269.15,542.6 L269.79,543.26 L270.43,543.88 L271.07,544.46 L271.71,545 L272.35,545.51 L272.99,545.97 L273.63,546.4 L274.27,546.79 L274.91,547.14 L275.55,547.45 L276.19,547.72 L276.83,547.95 L277.47,548.14 L278.11,548.29 L278.75,548.4 L279.39,548.47 L280.03,548.5 L280.67,548.49 L281.31,548.44 L281.95,548.35 L282.59,548.22 L283.23,548.05 L283.87,547.84 L284.51,547.59 L285.15,547.3 L285.79,546.98 L286.43,546.61 L287.07,546.2 L287.71,545.76 L288.35,545.27 L288.99,544.75 L289.63,544.19 L290.27,543.59 L290.92,542.95 L291.56,542.28 L292.2,541.57 L292.84,540.82 L293.48,540.04 L294.13,539.22 L294.77,538.36 L295.41,537.48 L296.05,536.55 L296.7,535.59 L297.34,534.6 L297.99,533.58 L298.63,532.52 L299.28,531.43 L299.92,530.31 L300.57,529.16 L301.21,527.97 L301.86,526.76 L302.5,525.52 L303.15,524.25 L303.8,522.95 L304.45,521.63 L305.1,520.28 L305.74,518.9 L306.39,517.5 L307.04,516.07 L307.69,514.62 L308.34,513.15 L308.99,511.65 L309.64,510.13 L310.3,508.6 L310.95,507.04 L311.6,505.46 L312.26,503.86 L312.91,502.25 L313.56,500.62 L314.22,498.97 L314.87,497.31 L315.53,495.64 L316.19,493.95 L316.84,492.25 L317.5,490.53 L318.16,488.81 L318.82,487.07 L319.47,485.33 L320.13,483.58 L320.79,481.82 L321.45,480.05 L322.12,478.28 L322.78,476.5 L323.44,474.72 L324.1,472.94 L324.77,471.15 L325.43,469.36 L326.09,467.58 L326.76,465.79 L327.43,464.01 L328.09,462.22 L328.76,460.44 L329.43,458.67 L330.09,456.9 L330.76,455.14 L331.43,453.38 L332.1,451.63 L332.77,449.89 L333.44,448.16 L334.11,446.44 L334.78,444.73 L335.45,443.03 L336.13,441.35 L336.8,439.67 L337.47,438.02 L338.15,436.38 L338.82,434.75 L339.5,433.15 L340.17,431.56 L340.85,429.99 L341.53,428.44 L342.2,426.91 L342.88,425.4 L343.56,423.91 L344.24,422.44 L344.92,421 L345.6,419.58 L346.28,418.19 L346.96,416.82 L347.64,415.48 L348.32,414.17 L349,412.88 L349.68,411.62 L350.36,410.39 L351.05,409.19 L351.73,408.02 L352.41,406.88 L353.1,405.77 L353.78,404.69 L354.46,403.64 L355.15,402.63 L355.83,401.65 L356.52,400.71 L357.2,399.79 L357.89,398.92 L358.58,398.08 L359.26,397.27 L359.95,396.5 L360.64,395.77 L361.32,395.07 L362.01,394.41 L362.7,393.79 L363.39,393.2 L364.07,392.65 L364.76,392.15 L365.45,391.68 L366.14,391.24 L366.83,390.85 L367.51,390.5 L368.2,390.19 L368.89,389.91 L369.58,389.68 L370.27,389.48 L370.96,389.33 L371.65,389.21 L372.34,389.14 L373.03,389.1 L373.71,389.11 L374.4,389.15 L375.09,389.24 L375.78,389.36 L376.47,389.53 L377.16,389.73 L377.85,389.98 L378.54,390.26 L379.23,390.59 L379.91,390.95 L380.6,391.35 L381.29,391.8 L381.98,392.28 L382.67,392.79 L383.35,393.35 L384.04,393.95 L384.73,394.58 L385.42,395.25 L386.1,395.95 L386.79,396.7 L387.48,397.48 L388.16,398.29 L388.85,399.14 L389.54,400.03 L390.22,400.95 L390.91,401.9 L391.59,402.89 L392.28,403.91 L392.96,404.97 L393.64,406.05 L394.33,407.17 L395.01,408.32 L395.69,409.5 L396.38,410.71 L397.06,411.95 L397.74,413.21 L398.42,414.51 L399.1,415.83 L399.78,417.18 L400.46,418.55 L401.14,419.95 L401.82,421.38 L402.5,422.82 L403.18,424.3 L403.86,425.79 L404.53,427.3 L405.21,428.84 L405.89,430.4 L406.56,431.97 L407.24,433.57 L407.91,435.18 L408.59,436.81 L409.26,438.45 L409.94,440.11 L410.61,441.79 L411.28,443.47 L411.95,445.17 L412.63,446.89 L413.3,448.61 L413.97,450.34 L414.64,452.09 L415.31,453.84 L415.97,455.6 L416.64,457.36 L417.31,459.14 L417.98,460.91 L418.64,462.69 L419.31,464.47 L419.98,466.26 L420.64,468.05 L421.3,469.83 L421.97,471.62 L422.63,473.41 L423.29,475.19 L423.96,476.97 L424.62,478.74 L425.28,480.51 L425.94,482.28 L426.6,484.04 L427.26,485.79 L427.92,487.53 L428.58,489.26 L429.23,490.98 L429.89,492.69 L430.55,494.39 L431.2,496.08 L431.86,497.75 L432.51,499.41 L433.17,501.05 L433.82,502.68 L434.48,504.29 L435.13,505.88 L435.78,507.45 L436.43,509 L437.09,510.53 L437.74,512.05 L438.39,513.54 L439.04,515 L439.69,516.45 L440.34,517.87 L440.99,519.27 L441.63,520.64 L442.28,521.98 L442.93,523.3 L443.58,524.59 L444.22,525.85 L444.87,527.08 L445.52,528.29 L446.16,529.46 L446.81,530.61 L447.45,531.72 L448.1,532.8 L448.74,533.85 L449.39,534.86 L450.03,535.85 L450.67,536.8 L451.32,537.71 L451.96,538.59 L452.6,539.44 L453.25,540.25 L453.89,541.02 L454.53,541.76 L455.17,542.46 L455.81,543.12 L456.45,543.75 L457.09,544.34 L457.74,544.89 L458.38,545.4 L459.02,545.88 L459.66,546.31 L460.3,546.71 L460.94,547.07 L461.58,547.38 L462.22,547.66 L462.86,547.9 L463.5,548.1 L464.14,548.26 L464.78,548.38 L465.42,548.46 L466.06,548.5 L466.7,548.49 L467.34,548.45 L467.98,548.37 L468.62,548.25 L469.26,548.09 L469.9,547.89 L470.54,547.65 L471.18,547.37 L471.82,547.05 L472.46,546.69 L473.1,546.29 L473.74,545.85 L474.38,545.38 L475.02,544.86 L475.66,544.31 L476.3,543.72 L476.94,543.09 L477.58,542.42 L478.22,541.72 L478.87,540.98 L479.51,540.21 L480.15,539.39 L480.79,538.55 L481.44,537.67 L482.08,536.75 L482.72,535.8 L483.37,534.81 L484.01,533.79 L484.65,532.74 L485.3,531.66 L485.94,530.55 L486.59,529.4 L487.24,528.23 L487.88,527.02 L488.53,525.79 L489.18,524.52 L489.82,523.23 L490.47,521.91 L491.12,520.57 L491.77,519.19 L492.42,517.8 L493.07,516.37 L493.72,514.93 L494.37,513.46 L495.02,511.97 L495.67,510.46 L496.32,508.92 L496.97,507.37 L497.62,505.79 L498.28,504.2 L498.93,502.59 L499.59,500.97 L500.24,499.32 L500.89,497.66 L501.55,495.99 L502.21,494.3 L502.86,492.61 L503.52,490.89 L504.18,489.17 L504.84,487.44 L505.5,485.7 L506.16,483.95 L506.82,482.19 L507.48,480.42 L508.14,478.65 L508.8,476.88 L509.46,475.1 L510.12,473.31 L510.79,471.53 L511.45,469.74 L512.11,467.95 L512.78,466.17 L513.44,464.38 L514.11,462.6 L514.78,460.82 L515.44,459.04 L516.11,457.27 L516.78,455.51 L517.45,453.75 L518.12,452 L518.79,450.25 L519.46,448.52 L520.13,446.8 L520.8,445.09 L521.47,443.39 L522.15,441.7 L522.82,440.03 L523.49,438.37 L524.17,436.72 L524.84,435.09 L525.52,433.48 L526.19,431.89 L526.87,430.32 L527.54,428.76 L528.22,427.23 L528.9,425.71 L529.58,424.22 L530.25,422.75 L530.93,421.3 L531.61,419.88 L532.29,418.48 L532.97,417.11 L533.65,415.76 L534.33,414.44 L535.02,413.15 L535.7,411.88 L536.38,410.65 L537.06,409.44 L537.74,408.26 L538.43,407.11 L539.11,406 L539.8,404.91 L540.48,403.86 L541.16,402.84 L541.85,401.85 L542.53,400.9 L543.22,399.98 L543.91,399.1 L544.59,398.25 L545.28,397.44 L545.96,396.66 L546.65,395.92 L547.34,395.21 L548.03,394.54 L548.71,393.91 L549.4,393.32 L550.09,392.77 L550.78,392.25 L551.46,391.77 L552.15,391.33 L552.84,390.93 L553.53,390.57 L554.22,390.25 L554.91,389.97 L555.6,389.72 L556.28,389.52 L556.97,389.36 L557.66,389.23 L558.35,389.15 L559.04,389.11 L559.73,389.1 L560.42,389.14 L561.11,389.22 L561.8,389.33 L562.49,389.49 L563.17,389.69 L563.86,389.92 L564.55,390.2 L565.24,390.52 L565.93,390.87 L566.62,391.27 L567.31,391.7 L567.99,392.17 L568.68,392.68 L569.37,393.23 L570.06,393.82 L570.74,394.44 L571.43,395.1 L572.12,395.8 L572.81,396.54 L573.49,397.31 L574.18,398.12 L574.87,398.96 L575.55,399.84 L576.24,400.75 L576.92,401.7 L577.61,402.68 L578.29,403.7 L578.98,404.74 L579.66,405.82 L580.34,406.93 L581.03,408.08 L581.71,409.25 L582.39,410.45 L583.07,411.68 L583.76,412.94 L584.44,414.23 L585.12,415.55 L585.8,416.89 L586.48,418.26 L587.16,419.66 L587.84,421.07 L588.52,422.52 L589.2,423.98 L589.87,425.47 L590.55,426.98 L591.23,428.52 L591.91,430.07 L592.58,431.64 L593.26,433.23 L593.93,434.84 L594.61,436.46 L595.28,438.1 L595.95,439.76 L596.63,441.43 L597.3,443.12 L597.97,444.82 L598.64,446.53 L599.31,448.25 L599.99,449.98 L600.66,451.72 L601.32,453.47 L601.99,455.23 L602.66,456.99 L603.33,458.76 L604,460.54 L604.66,462.32 L605.33,464.1 L605.99,465.88 L606.66,467.67 L607.32,469.46 L607.99,471.24 L608.65,473.03 L609.31,474.81 L609.98,476.59 L610.64,478.37 L611.3,480.14 L611.96,481.91 L612.62,483.67 L613.28,485.42 L613.94,487.16 L614.6,488.9 L615.25,490.62 L615.91,492.33 L616.57,494.04 L617.23,495.72 L617.88,497.4 L618.54,499.06 L619.19,500.71 L619.85,502.33 L620.5,503.95 L621.15,505.54 L621.8,507.12 L622.46,508.68 L623.11,510.21 L623.76,511.73 L624.41,513.22 L625.06,514.7 L625.71,516.15 L626.36,517.57 L627.01,518.97 L627.66,520.35 L628.31,521.7 L628.95,523.02 L629.6,524.32 L630.25,525.59 L630.9,526.83 L631.54,528.04 L632.19,529.22 L632.83,530.37 L633.48,531.49 L634.12,532.57 L634.77,533.63 L635.41,534.65 L636.06,535.64 L636.7,536.6 L637.34,537.52 L637.98,538.41 L638.63,539.26 L639.27,540.08 L639.91,540.86 L640.55,541.61 L641.2,542.32 L641.84,542.99 L642.48,543.62 L643.12,544.22 L643.76,544.78 L644.4,545.3 L645.04,545.78 L645.68,546.22 L646.32,546.63 L646.96,546.99 L647.6,547.32 L648.24,547.61 L648.88,547.85 L649.52,548.06 L650.16,548.23 L650.8,548.36 L651.44,548.44 L652.08,548.49 L652.72,548.5 L653.36,548.47 L654,548.39 L654.64,548.28 L655.28,548.13 L655.92,547.93 L656.56,547.7 L657.2,547.43 L657.84,547.12 L658.48,546.77 L659.12,546.38 L659.76,545.95 L660.4,545.48 L661.04,544.97 L661.68,544.43 L662.32,543.85 L662.97,543.23 L663.61,542.57 L664.25,541.87 L664.89,541.14 L665.53,540.37 L666.17,539.57 L666.82,538.73 L667.46,537.85 L668.1,536.94 L668.75,536 L669.39,535.02 L670.03,534.01 L670.68,532.97 L671.32,531.89 L671.97,530.78 L672.61,529.65 L673.26,528.48 L673.91,527.28 L674.55,526.05 L675.2,524.79 L675.85,523.5 L676.49,522.19 L677.14,520.85 L677.79,519.48 L678.44,518.09 L679.09,516.68 L679.74,515.24 L680.39,513.77 L681.04,512.28 L681.69,510.78 L682.34,509.25 L682.99,507.7 L683.65,506.13 L684.3,504.54 L684.95,502.93 L685.61,501.31 L686.26,499.67 L686.92,498.01 L687.57,496.34 L688.23,494.66 L688.89,492.96 L689.54,491.26 L690.2,489.54 L690.86,487.8 L691.52,486.06 L692.18,484.32 L692.84,482.56 L693.5,480.8 L694.16,479.03 L694.82,477.25 L695.48,475.47 L696.14,473.69 L696.81,471.9 L697.47,470.12 L698.13,468.33 L698.8,466.54 L699.46,464.76 L700.13,462.97 L700.8,461.19 L701.46,459.42 L702.13,457.65 L702.8,455.88 L703.47,454.12 L704.14,452.37 L704.81,450.62 L705.48,448.89 L706.15,447.16 L706.82,445.45 L707.49,443.74 L708.16,442.05 L708.84,440.38 L709.51,438.71 L710.18,437.07 L710.86,435.44 L711.53,433.82 L712.21,432.22 L712.88,430.65 L713.56,429.09 L714.24,427.55 L714.92,426.03 L715.59,424.53 L716.27,423.06 L716.95,421.61 L717.63,420.18 L718.31,418.77 L718.99,417.39 L719.67,416.04 L720.35,414.72 L721.03,413.42 L721.71,412.15 L722.4,410.9 L723.08,409.69 L723.76,408.51 L724.44,407.35 L725.13,406.23 L725.81,405.14 L726.5,404.08 L727.18,403.05 L727.86,402.06 L728.55,401.1 L729.24,400.17 L729.92,399.28 L730.61,398.43 L731.29,397.6 L731.98,396.82 L732.67,396.07 L733.35,395.36 L734.04,394.68 L734.73,394.04 L735.42,393.44 L736.1,392.88 L736.79,392.36 L737.48,391.87 L738.17,391.42 L738.86,391.01 L739.54,390.64 L740.23,390.31 L740.92,390.02 L741.61,389.77 L742.3,389.56 L742.99,389.39 L743.68,389.26 L744.37,389.16 L745.06,389.11 L745.74,389.1 L746.43,389.13 L747.12,389.2 L747.81,389.31 L748.5,389.45 L749.19,389.64 L749.88,389.87 L750.57,390.14 L751.26,390.45 L751.94,390.79 L752.63,391.18 L753.32,391.6 L754.01,392.07 L754.7,392.57 L755.38,393.11 L756.07,393.69 L756.76,394.31 L757.45,394.96 L758.13,395.65 L758.82,396.38 L759.51,397.14 L760.19,397.94 L760.88,398.78 L761.57,399.65 L762.25,400.56 L762.94,401.5 L763.62,402.47 L764.31,403.48 L764.99,404.52 L765.68,405.59 L766.36,406.7 L767.04,407.83 L767.73,409 L768.41,410.2 L769.09,411.42 L769.77,412.68 L770.45,413.96 L771.14,415.27 L771.82,416.61 L772.5,417.97 L773.18,419.36 L773.86,420.77 L774.53,422.21 L775.21,423.67 L775.89,425.16 L776.57,426.66 L777.25,428.19 L777.92,429.74 L778.6,431.31 L779.27,432.89 L779.95,434.5 L780.62,436.12 L781.3,437.76 L781.97,439.41 L782.65,441.08 L783.32,442.76 L783.99,444.46 L784.66,446.16 L785.33,447.88 L786,449.61 L786.67,451.35 L787.34,453.1 L788.01,454.86 L788.68,456.62 L789.35,458.39 L790.02,460.16 L790.68,461.94 L791.35,463.72 L792.01,465.51 L792.68,467.29 L793.34,469.08 L794.01,470.87 L794.67,472.65 L795.33,474.44 L796,476.22 L796.66,478 L797.32,479.77 L797.98,481.54 L798.64,483.3 L799.3,485.05 L799.96,486.8 L800.62,488.53 L801.28,490.26 L801.93,491.97 L802.59,493.68 L803.25,495.37 L803.9,497.05 L804.56,498.71 L805.21,500.36 L805.87,501.99 L806.52,503.61 L807.17,505.21 L807.83,506.79 L808.48,508.35 L809.13,509.89 L809.78,511.41 L810.43,512.91 L811.08,514.39 L811.73,515.84 L812.38,517.27 L813.03,518.68 L813.68,520.06 L814.33,521.42 L814.98,522.75 L815.63,524.05 L816.27,525.32 L816.92,526.57 L817.57,527.78 L818.21,528.97 L818.86,530.13 L819.5,531.25 L820.15,532.35 L820.79,533.41 L821.44,534.44 L822.08,535.44 L822.72,536.4 L823.37,537.33 L824.01,538.23 L824.65,539.09 L825.29,539.91 L825.94,540.7 L826.58,541.45 L827.22,542.17 L827.86,542.85 L828.5,543.49 L829.14,544.1 L829.79,544.66 L830.43,545.19 L831.07,545.68 L831.71,546.13 L832.35,546.55 L832.99,546.92 L833.63,547.25 L834.27,547.55 L834.91,547.8 L835.55,548.02 L836.19,548.2 L836.83,548.33 L837.47,548.43 L838.11,548.48 L838.75,548.5 L839.39,548.48 L840.03,548.41 L840.67,548.31 L841.31,548.16 L841.95,547.98 L842.59,547.75 L843.23,547.49 L843.87,547.19 L844.51,546.84 L845.15,546.46 L845.79,546.04 L846.43,545.58 L847.07,545.08 L847.71,544.55 L848.35,543.97 L848.99,543.36 L849.63,542.71 L850.27,542.02 L850.92,541.3 L851.56,540.54 L852.2,539.74 L852.84,538.91 L853.48,538.04 L854.13,537.14 L854.77,536.2 L855.41,535.23 L856.06,534.23 L856.7,533.19 L857.35,532.12 L857.99,531.02 L858.64,529.89 L859.28,528.73 L859.93,527.53 L860.58,526.31 L861.22,525.06 L861.87,523.78 L862.52,522.47 L863.17,521.14 L863.81,519.77 L864.46,518.39 L865.11,516.98 L865.76,515.54 L866.41,514.08 L867.06,512.6 L867.71,511.1 L868.36,509.57 L869.02,508.03 L869.67,506.46 L870.32,504.88 L870.98,503.27 L871.63,501.65 L872.28,500.02 L872.94,498.36 L873.59,496.7 L874.25,495.02 L874.91,493.32 L875.56,491.62 L876.22,489.9 L876.88,488.17 L877.54,486.43 L878.2,484.68 L878.86,482.93 L879.52,481.17 L880.18,479.4 L880.84,477.63 L881.5,475.85 L882.16,474.07 L882.83,472.28 L883.49,470.49 L884.15,468.71 L884.82,466.92 L885.48,465.13 L886.15,463.35 L886.82,461.57 L887.48,459.79 L888.15,458.02 L888.82,456.25 L889.49,454.49 L890.16,452.73 L890.83,450.99 L891.5,449.25 L892.17,447.52 L892.84,445.81 L893.51,444.1 L894.18,442.41 L894.85,440.73 L895.53,439.06 L896.2,437.41 L896.88,435.78 L897.55,434.16 L898.23,432.56 L898.9,430.98 L899.58,429.41 L900.26,427.87 L900.93,426.35 L901.61,424.85 L902.29,423.37 L902.97,421.91 L903.65,420.48 L904.33,419.07 L905.01,417.68 L905.69,416.33 L906.37,414.99 L907.05,413.69 L907.73,412.41 L908.41,411.16 L909.09,409.94 L909.78,408.75 L910.46,407.59 L911.14,406.46 L911.83,405.37 L912.51,404.3 L913.2,403.27 L913.88,402.27 L914.57,401.3 L915.25,400.37 L915.94,399.47 L916.62,398.6 L917.31,397.77 L918,396.98 L918.68,396.23 L919.37,395.5 L920.06,394.82 L920.74,394.18 L921.43,393.57 L922.12,393 L922.81,392.46 L923.49,391.97 L924.18,391.51 L924.87,391.1 L925.56,390.72 L926.25,390.38 L926.94,390.08 L927.63,389.82 L928.31,389.6 L929,389.42 L929.69,389.28 L930.38,389.18 L931.07,389.12 L931.76,389.1 L932.45,389.12 L933.14,389.18 L933.83,389.28 L934.52,389.42 L935.2,389.6 L935.89,389.82 L936.58,390.08 L937.27,390.38 L937.96,390.72 L938.65,391.09 L939.34,391.51 L940.02,391.97 L940.71,392.46 L941.4,392.99 L942.09,393.57 L942.78,394.17 L943.46,394.82 L944.15,395.5 L944.84,396.22 L945.52,396.98 L946.21,397.77 L946.9,398.6 L947.58,399.47 L948.27,400.36 L948.95,401.3 L949.64,402.26 L950.32,403.26 L951.01,404.3 L951.69,405.36 L952.38,406.46 L953.06,407.59 L953.74,408.75 L954.42,409.94 L955.11,411.16 L955.79,412.41 L956.47,413.69 L957.15,414.99 L957.83,416.32 L958.51,417.68 L959.19,419.06 L959.87,420.47 L960.55,421.91 L961.23,423.36 L961.91,424.84 L962.59,426.34 L963.26,427.87 L963.94,429.41 L964.62,430.97 L965.29,432.56 L965.97,434.16 L966.64,435.78 L967.32,437.41 L967.99,439.06 L968.66,440.73 L969.34,442.41 L970.01,444.1 L970.68,445.8 L971.35,447.52 L972.02,449.25 L972.69,450.98 L973.36,452.73 L974.03,454.49 L974.7,456.25 L975.37,458.01 L976.04,459.79 L976.7,461.57 L977.37,463.35 L978.03,465.13 L978.7,466.92" stroke="#6eb092" stroke-width="0.75" fill="none"/>
<text transform="translate(280.5,372.4) scale(0.1)" font-size="80" fill="#25c825" text-anchor="middle" font-weight="bold" textLength="232" lengthAdjust="spacingAndGlyphs" stroke="#25c825" stroke-width="2.5">I(R15)</text>
<text transform="translate(745.5,372.4) scale(0.1)" font-size="80" fill="#1818f0" text-anchor="middle" font-weight="bold" textLength="190" lengthAdjust="spacingAndGlyphs" stroke="#1818f0" stroke-width="2.5">I(R6)</text>
</g>
</svg></body></html>
